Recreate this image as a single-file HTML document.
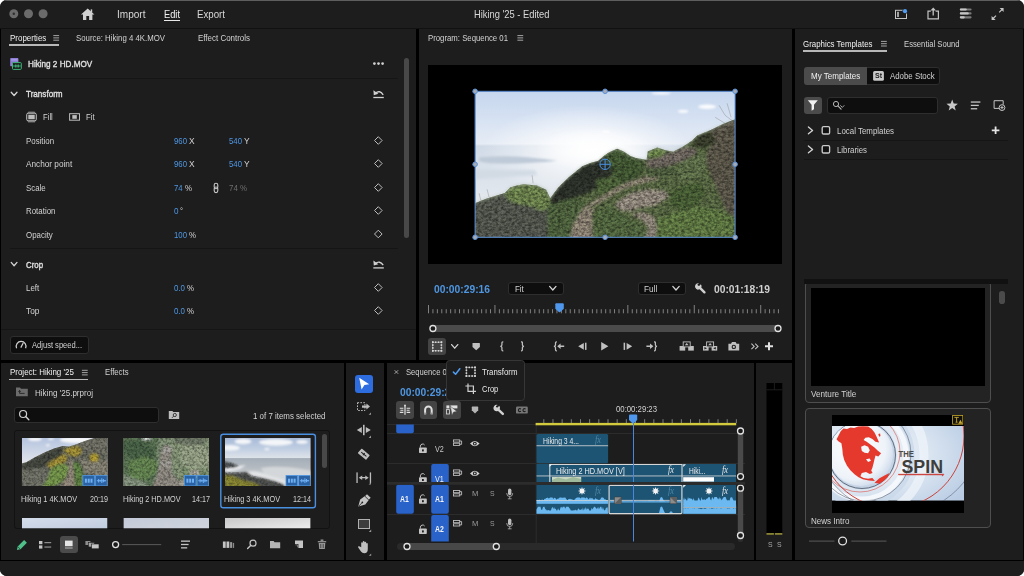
<!DOCTYPE html>
<html lang="en">
<head>
<meta charset="utf-8">
<title>Hiking '25 - Edited</title>
<style>
html,body{margin:0;padding:0;background:#fff;}
body{width:1024px;height:576px;overflow:hidden;position:relative;font-family:"Liberation Sans",sans-serif;}
#win{position:absolute;left:0;top:0;width:1024px;height:576px;background:#000;border-radius:7px;overflow:hidden;}
.b{position:absolute;box-sizing:border-box;}
.t{position:absolute;white-space:nowrap;line-height:1;transform-origin:0 50%;color:#d2d2d2;}
svg.ov{position:absolute;left:0;top:0;width:1024px;height:576px;overflow:hidden;}
</style>
</head>
<body>
<div id="win">
<div class="b titlebar" style="left:0px;top:0px;width:1024px;height:28px;background:#1d1d1d;"></div>
<div class="b" style="left:0px;top:0px;width:1024px;height:1px;background:#5e5e5e;"></div>
<div class="b" style="left:0px;top:28px;width:1024px;height:1px;background:#111;"></div>
<div class="b panel props" style="left:1px;top:29px;width:415px;height:331.3px;background:#1d1d1d;"></div>
<div class="b panel program" style="left:419px;top:29px;width:373px;height:331.3px;background:#1d1d1d;"></div>
<div class="b panel graphics" style="left:794.6px;top:29px;width:228px;height:531px;background:#1d1d1d;"></div>
<div class="b panel project" style="left:1px;top:363px;width:342.5px;height:197px;background:#1d1d1d;"></div>
<div class="b panel tools" style="left:346.4px;top:363px;width:37.8px;height:197px;background:#1d1d1d;"></div>
<div class="b panel timeline" style="left:387px;top:363px;width:366.8px;height:197px;background:#1d1d1d;"></div>
<div class="b panel meters" style="left:756.3px;top:363px;width:35.7px;height:197px;background:#1d1d1d;"></div>
<div class="b statusbar" style="left:0px;top:561.2px;width:1024px;height:15px;background:#1d1d1d;"></div>
<div class="b" style="left:164px;top:19.6px;width:16px;height:1.2px;background:#e8e8e8;"></div>
<div class="b" style="left:9px;top:44px;width:50px;height:1.5px;background:#b8b8b8;"></div>
<div class="b" style="left:10px;top:77.6px;width:388px;height:1px;background:#151515;"></div>
<div class="b" style="left:10px;top:248.2px;width:388px;height:1px;background:#151515;"></div>
<div class="b" style="left:1px;top:329px;width:415px;height:1px;background:#151515;"></div>
<div class="b" style="left:10.4px;top:336.4px;width:78.2px;height:17.2px;background:#0e0e0e;border:1px solid #2e2e2e;border-radius:3px;"></div>
<div class="b" style="left:403.7px;top:57.8px;width:5.3px;height:180.5px;background:#484848;border-radius:2.7px;"></div>
<div class="b" style="left:428px;top:65px;width:354px;height:198.5px;background:#000;"></div>
<div class="b" style="left:508.4px;top:282.3px;width:55.2px;height:12.4px;background:#0e0e0e;border:1px solid #2e2e2e;border-radius:3px;"></div>
<div class="b" style="left:637.7px;top:282.3px;width:48.5px;height:12.4px;background:#0e0e0e;border:1px solid #2e2e2e;border-radius:3px;"></div>
<div class="b" style="left:431px;top:325px;width:349px;height:7px;background:#4b4b4b;border-radius:3.5px;"></div>
<div class="b" style="left:428px;top:337.8px;width:18px;height:17.4px;background:#444;border-radius:3px;"></div>
<div class="b" style="left:9px;top:378.6px;width:78.8px;height:1.5px;background:#b8b8b8;"></div>
<div class="b" style="left:13.5px;top:406.5px;width:145.4px;height:16.8px;background:#0e0e0e;border:1px solid #2e2e2e;border-radius:3px;"></div>
<div class="b" style="left:13.7px;top:430.3px;width:316.6px;height:99.2px;background:#1d1d1d;border:1px solid #121212;border-radius:3px;"></div>
<div class="b" style="left:321.7px;top:433.6px;width:5.5px;height:34.2px;background:#484848;border-radius:2.7px;"></div>
<div class="b" style="left:60px;top:535.8px;width:17.5px;height:17.3px;background:#4b4b4b;border-radius:3px;"></div>
<div class="b" style="left:355.2px;top:375px;width:17.8px;height:17.6px;background:#2d6de0;border-radius:3px;"></div>
<div class="b" style="left:396.2px;top:401.2px;width:17.6px;height:17.5px;background:#444;border-radius:3px;"></div>
<div class="b" style="left:419.7px;top:401.2px;width:17.6px;height:17.5px;background:#444;border-radius:3px;"></div>
<div class="b" style="left:443px;top:401.2px;width:17.6px;height:17.5px;background:#444;border-radius:3px;"></div>
<div class="b" style="left:802.5px;top:50px;width:84.5px;height:1.5px;background:#b8b8b8;"></div>
<div class="b" style="left:804.1px;top:67.3px;width:136px;height:17.4px;background:#0e0e0e;border:1px solid #2e2e2e;border-radius:3px;"></div>
<div class="b" style="left:804.1px;top:67.3px;width:63.2px;height:17.4px;background:#4b4b4b;border-radius:3px 0 0 3px;"></div>
<div class="b" style="left:804.1px;top:96.6px;width:17.5px;height:17.5px;background:#4b4b4b;border-radius:3px;"></div>
<div class="b" style="left:827.4px;top:96.5px;width:110.2px;height:17.2px;background:#0e0e0e;border:1px solid #2e2e2e;border-radius:3px;"></div>
<div class="b" style="left:804px;top:139.6px;width:203.5px;height:1px;background:#151515;"></div>
<div class="b" style="left:804px;top:158.6px;width:203.5px;height:1px;background:#151515;"></div>
<div class="b" style="left:804px;top:279px;width:204px;height:4px;background:#111;"></div>
<div class="b" style="left:805px;top:281px;width:185.5px;height:121.6px;background:#232323;border:1px solid #4e4e4e;border-radius:4px;"></div>
<div class="b" style="left:804px;top:274px;width:204px;height:5px;background:#1d1d1d;"></div>
<div class="b" style="left:804.1px;top:278.9px;width:203.7px;height:5px;background:#111;"></div>
<div class="b" style="left:810.7px;top:287.6px;width:174.5px;height:98.6px;background:#000;"></div>
<div class="b" style="left:805px;top:408.4px;width:185.5px;height:120px;background:#232323;border:1px solid #4e4e4e;border-radius:4px;"></div>
<div class="b" style="left:832px;top:414.6px;width:131.8px;height:98px;background:#000;"></div>
<div class="b" style="left:999px;top:291px;width:5.6px;height:12.6px;background:#4b4b4b;border-radius:2.8px;"></div>
<svg class="ov" viewBox="0 0 1024 576">
<circle cx="13.8" cy="13.8" r="4.5" fill="#6b6b6b"/>
<circle cx="28.5" cy="13.8" r="4.5" fill="#6b6b6b"/>
<circle cx="43.1" cy="13.8" r="4.5" fill="#6b6b6b"/>
<circle cx="13.8" cy="13.8" r="1.2" fill="#2e2e2e"/>
<g transform="translate(81 8.5)" ><path d="M6.7 0L13.4 6.1H11.4V11.5H8.1V7.6H5.3V11.5H2V6.1H0Z" fill="#d0d0d0"/><rect x="9.7" y="0.9" width="1.5" height="3" fill="#d0d0d0"/></g>
<g transform="translate(895 9.8)" ><rect x="0.5" y="0.5" width="11" height="8.2" fill="none" stroke="#c4c4c4" stroke-width="1"/><rect x="2.2" y="2" width="1.6" height="5.2" fill="#c4c4c4"/><circle cx="10" cy="1.4" r="2.6" fill="#1d1d1d"/><circle cx="10" cy="1.4" r="2.1" fill="#4f9cf0"/></g>
<g transform="translate(927.4 7.6)" ><path d="M3.4 3.6H0.6V11.2H11V3.6H8.2" fill="none" stroke="#c4c4c4" stroke-width="1.2"/><path d="M5.8 8V1.6" stroke="#c4c4c4" stroke-width="1.3"/><path d="M3 3L5.8 0L8.6 3Z" fill="#c4c4c4"/></g>
<g transform="translate(959.8 8.4)" ><rect x="0" y="0.0" width="11.8" height="2.2" rx="1.1" fill="#7a7a7a"/><rect x="0" y="0.0" width="7" height="2.2" rx="1.1" fill="#c4c4c4"/><rect x="0" y="3.9" width="11.8" height="2.2" rx="1.1" fill="#7a7a7a"/><rect x="0" y="3.9" width="9" height="2.2" rx="1.1" fill="#c4c4c4"/><rect x="0" y="7.8" width="11.8" height="2.2" rx="1.1" fill="#7a7a7a"/><rect x="0" y="7.8" width="5" height="2.2" rx="1.1" fill="#c4c4c4"/></g>
<g transform="translate(991.6 8)" ><path d="M7.6 4.4L11 1M1 11L4.4 7.6" stroke="#c4c4c4" stroke-width="1.2"/><path d="M8 0H12V4Z M0 8V12H4Z" fill="#c4c4c4"/></g>
<g transform="translate(53.3 35.2)" ><path d="M0 0.4H5.8M0 2.7H5.8M0 5H5.8" stroke="#b4b4b4" stroke-width="0.9" fill="none"/></g>
<g transform="translate(10.2 58.1)" ><rect x="0" y="0" width="8.2" height="8.2" rx="0.8" fill="#8e7fd6"/><rect x="0.9" y="0.9" width="6.4" height="1.6" fill="#a597e6"/><rect x="2.3" y="4.5" width="8.8" height="6.8" rx="0.8" fill="#1d1d1d" stroke="#3fb57a" stroke-width="1"/><path d="M2.8 7.9H10.6M5.2 6.4V9.4M6.8 6.4V9.4M8.4 6.4V9.4" stroke="#3fb57a" stroke-width="0.9"/></g>
<circle cx="374.4" cy="63.6" r="1.35" fill="#d0d0d0"/><circle cx="378.5" cy="63.6" r="1.35" fill="#d0d0d0"/><circle cx="382.59999999999997" cy="63.6" r="1.35" fill="#d0d0d0"/>
<g transform="translate(11.2 92.2)" ><path d="M0 0L2.9 3.3L5.8 0" stroke="#d4d4d4" stroke-width="1.3" fill="none" stroke-linejoin="round" stroke-linecap="round"/></g>
<g transform="translate(373 90)" ><path d="M0.3 7.5H10.8" stroke="#d0d0d0" stroke-width="1.3" fill="none"/><path d="M2.4 3.2Q6.6 -0.4 10.2 4.8" stroke="#d0d0d0" stroke-width="1.4" fill="none"/><path d="M0.4 0.2L0.8 5.2L5.4 3.8Z" fill="#d0d0d0"/></g>
<g transform="translate(26.2 111.4)" ><rect x="1.6" y="0" width="7.4" height="11.2" rx="1.2" fill="#6f6f6f"/><rect x="0.5" y="1.8" width="9.6" height="7.6" rx="1.4" fill="#2a2a2a" stroke="#bdbdbd" stroke-width="1"/><rect x="2.1" y="3.4" width="6.4" height="4.4" fill="#bdbdbd"/></g>
<g transform="translate(69.1 113.2)" ><rect x="0.5" y="0.5" width="9.9" height="6.5" fill="none" stroke="#bdbdbd" stroke-width="1"/><rect x="3.2" y="1.9" width="4.5" height="3.7" fill="#bdbdbd"/></g>
<path d="M378.3 136.7L382.1 140.5L378.3 144.3L374.5 140.5Z" fill="none" stroke="#bdbdbd" stroke-width="1"/>
<path d="M378.3 159.7L382.1 163.5L378.3 167.3L374.5 163.5Z" fill="none" stroke="#bdbdbd" stroke-width="1"/>
<path d="M378.3 183.7L382.1 187.5L378.3 191.3L374.5 187.5Z" fill="none" stroke="#bdbdbd" stroke-width="1"/>
<path d="M378.3 206.7L382.1 210.5L378.3 214.3L374.5 210.5Z" fill="none" stroke="#bdbdbd" stroke-width="1"/>
<path d="M378.3 230.2L382.1 234.0L378.3 237.8L374.5 234.0Z" fill="none" stroke="#bdbdbd" stroke-width="1"/>
<g transform="translate(213.6 182.6)" ><rect x="0.6" y="0.6" width="3.6" height="5.6" rx="1.8" fill="none" stroke="#c8c8c8" stroke-width="1.1"/><rect x="0.6" y="4.4" width="3.6" height="5.6" rx="1.8" fill="none" stroke="#c8c8c8" stroke-width="1.1"/></g>
<g transform="translate(11.2 262.4)" ><path d="M0 0L2.9 3.3L5.8 0" stroke="#d4d4d4" stroke-width="1.3" fill="none" stroke-linejoin="round" stroke-linecap="round"/></g>
<g transform="translate(373 260.4)" ><path d="M0.3 7.5H10.8" stroke="#d0d0d0" stroke-width="1.3" fill="none"/><path d="M2.4 3.2Q6.6 -0.4 10.2 4.8" stroke="#d0d0d0" stroke-width="1.4" fill="none"/><path d="M0.4 0.2L0.8 5.2L5.4 3.8Z" fill="#d0d0d0"/></g>
<path d="M378.3 283.7L382.1 287.5L378.3 291.3L374.5 287.5Z" fill="none" stroke="#bdbdbd" stroke-width="1"/>
<path d="M378.3 306.7L382.1 310.5L378.3 314.3L374.5 310.5Z" fill="none" stroke="#bdbdbd" stroke-width="1"/>
<g transform="translate(15.6 340)" ><path d="M1 8.2A4.9 4.9 0 1 1 10 8.2" fill="none" stroke="#d0d0d0" stroke-width="1.2"/><path d="M5.2 7.6L7.6 3" stroke="#d0d0d0" stroke-width="1.2"/></g>
<g transform="translate(517.4 35.2)" ><path d="M0 0.4H5.8M0 2.7H5.8M0 5H5.8" stroke="#b4b4b4" stroke-width="0.9" fill="none"/></g>
<svg x="475.1" y="91.3" width="260" height="146" viewBox="0 0 260 146" preserveAspectRatio="none" overflow="hidden">
<defs>
<linearGradient id="mpsky" x1="0" y1="0" x2="0" y2="1">
<stop offset="0" stop-color="#c6d6ee"/><stop offset="0.18" stop-color="#d5e1f2"/><stop offset="0.36" stop-color="#e6ecf5"/><stop offset="0.375" stop-color="#d0dae7"/><stop offset="0.5" stop-color="#d8e0ea"/><stop offset="0.75" stop-color="#e3e8ee"/><stop offset="1" stop-color="#e8ecf0"/>
</linearGradient>
<radialGradient id="mpsun" cx="0.5" cy="0.5" r="0.5">
<stop offset="0" stop-color="#ffffff" stop-opacity="0.95"/><stop offset="0.45" stop-color="#ffffff" stop-opacity="0.6"/><stop offset="1" stop-color="#ffffff" stop-opacity="0"/>
</radialGradient>
<filter id="mpb1" x="-20%" y="-20%" width="140%" height="140%"><feGaussianBlur stdDeviation="1"/></filter>
<filter id="mpb2" x="-20%" y="-20%" width="140%" height="140%"><feGaussianBlur stdDeviation="1.8"/></filter>
<filter id="mpn" x="0" y="0" width="100%" height="100%">
<feTurbulence type="fractalNoise" baseFrequency="0.3 0.4" numOctaves="4" seed="4" result="t"/>
<feColorMatrix in="t" type="matrix" values="0 0 0 0 0  0 0 0 0 0  0 0 0 0 0  1.9 0 0 0 -0.7"/>
<feComposite in2="SourceGraphic" operator="in"/>
</filter>
<filter id="mpn2" x="0" y="0" width="100%" height="100%">
<feTurbulence type="fractalNoise" baseFrequency="0.35 0.45" numOctaves="4" seed="11" result="t"/>
<feColorMatrix in="t" type="matrix" values="0 0 0 0 0  0 0 0 0 0  0 0 0 0 0  0 2.0 0 0 -0.8"/>
<feComposite in2="SourceGraphic" operator="in"/>
</filter>
<clipPath id="mpland"><path d="M-2.4 112.8 L11.0 107.5 L21.7 104.3 L29.7 101.6 L35.0 96.3 L41.7 94.1 L48.4 93.0 L61.8 94.1 L71.1 98.4 L75.1 107.0 L83.2 96.3 L93.9 85.6 L107.2 74.9 L115.2 71.7 L123.3 69.5 L128.6 64.7 L134.0 61.0 L142.0 57.5 L148.7 60.2 L155.3 64.7 L160.7 66.8 L171.4 68.4 L172.7 60.2 L182.1 56.1 L189.6 58.8 L198.1 60.4 L208.8 54.8 L216.8 49.5 L222.2 44.1 L235.6 38.8 L248.9 32.1 L262.3 27.3 L262.3 149.7 L-2.4 149.7 Z"/></clipPath>
</defs>
<rect width="260" height="146" fill="url(#mpsky)"/>
<ellipse cx="112" cy="60" rx="105" ry="46" fill="url(#mpsun)"/><ellipse cx="120" cy="58" rx="60" ry="22" fill="url(#mpsun)"/>
<path d="M4 66 Q40 62.5 82 69.5 Q60 72 30 72.5 Q12 72.5 4 70 Z" fill="#bfcad8" filter="url(#mpb1)"/>
<path d="M0 78 L60 79 L62 84 L0 88 Z" fill="#d2dae4" filter="url(#mpb2)"/>
<g fill="#fff" filter="url(#mpb1)" opacity="0.9"><ellipse cx="232" cy="15.5" rx="9" ry="2.2"/><ellipse cx="208" cy="20" rx="5" ry="1.5"/><ellipse cx="131" cy="40.5" rx="4" ry="1"/><ellipse cx="186" cy="2" rx="10" ry="1.2"/></g>
<g clip-path="url(#mpland)">
<rect width="260" height="146" fill="#67794f"/>
<g filter="url(#mpb2)">
<path d="M75.1 107.0 L83.2 96.3 L93.9 85.6 L107.2 74.9 L123.3 69.5 L134.0 61.5 L142.0 58.8 L144.7 69.5 L139.3 80.2 L134.0 86.9 L123.3 96.3 L109.9 102.9 L96.5 107.0 L83.2 112.3 L75.1 113.6 Z" fill="#353b30"/>
<path d="M128.6 64.7 L142.0 57.5 L155.3 64.7 L166.0 68.2 L168.7 77.5 L160.7 88.2 L150.0 93.6 L139.3 88.2 L136.6 77.5 Z" fill="#50683d"/>
<path d="M120.6 88.2 L139.3 85.6 L147.3 93.6 L139.3 101.6 L123.3 104.3 Z" fill="#5b7445"/>
<path d="M-2.4 112.8 L11.0 107.5 L29.7 101.6 L35.0 109.6 L61.8 112.3 L72.5 117.6 L75.1 149.7 L-2.4 149.7 Z" fill="#62665b"/>
<path d="M29.7 101.6 L35.0 96.3 L48.4 93.0 L61.8 94.1 L71.1 98.4 L75.1 107.0 L74.1 115.0 L67.1 120.3 L56.4 115.0 L40.4 112.3 L32.4 108.3 Z" fill="#809a5b"/>
<path d="M72.5 115.0 L85.8 109.6 L101.9 107.0 L112.6 112.3 L107.2 123.0 L96.5 133.7 L93.9 149.7 L72.5 149.7 Z" fill="#5b7348"/>
<path d="M94.4 149.7 L97.9 133.7 L104.5 123.0 L113.9 116.3 L123.3 112.3 L136.6 104.3 L148.7 97.6 L158.0 94.1 L168.7 91.4 L182.1 88.8 L186.4 82.9 L179.4 81.8 L166.0 87.2 L152.7 90.9 L139.3 97.6 L128.6 104.3 L117.9 110.2 L109.9 115.5 L103.2 122.5 L99.2 133.7 L96.5 149.7 Z" fill="#a79b8a"/>
<path d="M94.4 149.7 L98.1 133.7 L105.1 123.0 L114.7 116.6 L120.6 118.2 L118.4 128.3 L117.4 139.0 L117.9 149.7 Z" fill="#a69a89"/>
<path d="M139.3 112.3 L155.3 101.6 L171.4 97.6 L187.4 98.9 L195.5 104.3 L187.4 109.6 L179.4 115.0 L166.0 116.3 L155.3 120.3 L144.7 119.0 Z" fill="#aaa093"/>
<path d="M155.3 123.0 L168.7 120.3 L179.4 125.7 L182.1 136.4 L179.4 149.7 L168.7 149.7 L173.5 136.4 L166.0 128.3 Z" fill="#a69c8e"/>
<path d="M116.6 120.3 L134.0 113.6 L144.7 120.3 L155.3 128.3 L166.0 133.7 L168.7 149.7 L117.9 149.7 Z" fill="#60784b"/>
<path d="M171.4 68.4 L182.1 64.7 L198.1 60.4 L208.8 55.6 L219.5 56.7 L222.2 62.0 L208.8 69.5 L192.8 74.9 L179.4 77.5 L171.4 74.9 Z" fill="#81786f"/>
<path d="M168.7 77.5 L182.1 76.2 L198.1 74.9 L200.8 81.6 L187.4 85.6 L174.1 86.9 Z" fill="#5b6e48"/>
<path d="M172.7 60.2 L182.1 56.1 L189.6 58.8 L187.4 64.7 L179.4 66.8 L173.5 66.8 Z" fill="#7d9a57"/>
<path d="M216.8 49.5 L222.2 44.1 L235.6 38.8 L243.6 41.4 L240.9 50.8 L230.2 56.7 L219.5 56.7 Z" fill="#454c35"/>
<path d="M235.6 38.8 L248.9 32.1 L262.3 27.3 L262.3 128.3 L251.6 120.3 L243.6 101.6 L235.6 82.9 L230.2 69.5 L232.9 57.5 L240.9 50.8 Z" fill="#6a6557"/>
<path d="M192.8 101.6 L208.8 93.6 L224.9 90.9 L230.2 101.6 L222.2 115.0 L206.1 119.0 L195.5 115.0 Z" fill="#577040"/>
<path d="M182.1 128.3 L203.5 120.3 L224.9 115.0 L246.3 120.3 L262.3 128.3 L262.3 149.7 L182.1 149.7 Z" fill="#6f8d50"/>
<path d="M208.8 69.5 L222.2 62.8 L231.6 64.2 L230.2 74.9 L222.2 85.6 L208.8 88.2 L200.8 82.9 Z" fill="#6f8458"/>
</g>
<rect width="260" height="146" fill="#12180c" filter="url(#mpn)" opacity="0.5"/>
<rect width="260" height="146" fill="#e4e8d2" filter="url(#mpn2)" opacity="0.4"/>
</g>
<path d="M-2.4 112.8 L11.0 107.5 L21.7 104.3 L29.7 101.6 L35.0 96.3 L41.7 94.1 L48.4 93.0 L61.8 94.1 L71.1 98.4 L75.1 107.0 L83.2 96.3 L93.9 85.6 L107.2 74.9 L115.2 71.7 L123.3 69.5 L128.6 64.7 L134.0 61.0 L142.0 57.5 L148.7 60.2 L155.3 64.7 L160.7 66.8 L171.4 68.4 L172.7 60.2 L182.1 56.1 L189.6 58.8 L198.1 60.4 L208.8 54.8 L216.8 49.5 L222.2 44.1 L235.6 38.8 L248.9 32.1 L262.3 27.3 L262.3 149.7 L-2.4 149.7 Z" fill="none" stroke="#b9c2b8" stroke-width="1.6" opacity="0.55" filter="url(#mpb1)"/>
<g stroke="#77766c" stroke-width="0.5" fill="none" opacity="0.7"><path d="M244 14 L250 24 L258 30 M252 12 L256 26 M240 26 L250 32 M58 92 L57 84 M14 106 L12 98 M6 110 L4 102"/></g>
</svg>
<rect x="475.1" y="91.3" width="260" height="146" fill="none" stroke="#5b8fd6" stroke-width="1"/>
<circle cx="475.1" cy="91.3" r="2.3" fill="#a4abb6" stroke="#5b8fd6" stroke-width="1"/>
<circle cx="475.1" cy="164.3" r="2.3" fill="#a4abb6" stroke="#5b8fd6" stroke-width="1"/>
<circle cx="475.1" cy="237.3" r="2.3" fill="#a4abb6" stroke="#5b8fd6" stroke-width="1"/>
<circle cx="605.1" cy="91.3" r="2.3" fill="#a4abb6" stroke="#5b8fd6" stroke-width="1"/>
<circle cx="605.1" cy="237.3" r="2.3" fill="#a4abb6" stroke="#5b8fd6" stroke-width="1"/>
<circle cx="735.1" cy="91.3" r="2.3" fill="#a4abb6" stroke="#5b8fd6" stroke-width="1"/>
<circle cx="735.1" cy="164.3" r="2.3" fill="#a4abb6" stroke="#5b8fd6" stroke-width="1"/>
<circle cx="735.1" cy="237.3" r="2.3" fill="#a4abb6" stroke="#5b8fd6" stroke-width="1"/>
<g stroke="#4a90e2" stroke-width="1" fill="none"><circle cx="605.1" cy="164.3" r="5.2"/><path d="M599.9 164.3H610.3M605.1 159.1V169.5"/></g>
<g transform="translate(549.6 286.4)" ><path d="M0 0L3.2 3.6L6.4 0" stroke="#d4d4d4" stroke-width="1.3" fill="none" stroke-linejoin="round" stroke-linecap="round"/></g>
<g transform="translate(672.8 286.4)" ><path d="M0 0L3.2 3.6L6.4 0" stroke="#d4d4d4" stroke-width="1.3" fill="none" stroke-linejoin="round" stroke-linecap="round"/></g>
<g transform="translate(695 283)" ><g transform="scale(1.0)"><path d="M3.4 0.2A3.3 3.3 0 0 0 0.2 4.6A3.3 3.3 0 0 0 4.6 6.3L8.6 10.2A1.2 1.2 0 0 0 10.3 8.5L6.3 4.6A3.3 3.3 0 0 0 5.9 1.2L4.1 3L2.8 2.6L2.5 1.3L4.2 0.3Z" fill="#d0d0d0"/></g></g>
<path d="M428.50 305V313.3M432.93 309.2V313.3M437.36 309.2V313.3M441.79 309.2V313.3M446.22 309.2V313.3M450.65 309.2V313.3M455.08 309.2V313.3M459.51 309.2V313.3M463.94 309.2V313.3M468.37 309.2V313.3M472.80 309.2V313.3M477.22 309.2V313.3M481.65 309.2V313.3M486.08 309.2V313.3M490.51 309.2V313.3M494.94 305V313.3M499.37 309.2V313.3M503.80 309.2V313.3M508.23 309.2V313.3M512.66 309.2V313.3M517.09 309.2V313.3M521.52 309.2V313.3M525.95 309.2V313.3M530.38 309.2V313.3M534.81 309.2V313.3M539.24 309.2V313.3M543.67 309.2V313.3M548.10 309.2V313.3M552.53 309.2V313.3M556.96 309.2V313.3M561.38 305V313.3M565.81 309.2V313.3M570.24 309.2V313.3M574.67 309.2V313.3M579.10 309.2V313.3M583.53 309.2V313.3M587.96 309.2V313.3M592.39 309.2V313.3M596.82 309.2V313.3M601.25 309.2V313.3M605.68 309.2V313.3M610.11 309.2V313.3M614.54 309.2V313.3M618.97 309.2V313.3M623.40 309.2V313.3M627.83 305V313.3M632.26 309.2V313.3M636.69 309.2V313.3M641.12 309.2V313.3M645.55 309.2V313.3M649.98 309.2V313.3M654.40 309.2V313.3M658.83 309.2V313.3M663.26 309.2V313.3M667.69 309.2V313.3M672.12 309.2V313.3M676.55 309.2V313.3M680.98 309.2V313.3M685.41 309.2V313.3M689.84 309.2V313.3M694.27 305V313.3M698.70 309.2V313.3M703.13 309.2V313.3M707.56 309.2V313.3M711.99 309.2V313.3M716.42 309.2V313.3M720.85 309.2V313.3M725.28 309.2V313.3M729.71 309.2V313.3M734.14 309.2V313.3M738.57 309.2V313.3M742.99 309.2V313.3M747.42 309.2V313.3M751.85 309.2V313.3M756.28 309.2V313.3M760.71 305V313.3M765.14 309.2V313.3M769.57 309.2V313.3M774.00 309.2V313.3M778.43 309.2V313.3" stroke="#9c9c9c" stroke-width="0.8"/>
<path d="M555.3 304.2Q555.3 303.2 556.3 303.2H562.8Q563.8 303.2 563.8 304.2V308.8L560 312.2H559.1L555.3 308.8Z" fill="#4f97ec"/>
<circle cx="432.9" cy="328.5" r="3" fill="#1b1b1b" stroke="#e2e2e2" stroke-width="1.3"/>
<circle cx="778" cy="328.5" r="3" fill="#1b1b1b" stroke="#e2e2e2" stroke-width="1.3"/>
<g transform="translate(432 341.4)" ><rect x="0.00" y="0.00" width="1.6" height="1.6" fill="#d8d8d8"/><rect x="0.00" y="8.60" width="1.6" height="1.6" fill="#d8d8d8"/><rect x="0.00" y="0.00" width="1.6" height="1.6" fill="#d8d8d8"/><rect x="8.60" y="0.00" width="1.6" height="1.6" fill="#d8d8d8"/><rect x="2.87" y="0.00" width="1.6" height="1.6" fill="#d8d8d8"/><rect x="2.87" y="8.60" width="1.6" height="1.6" fill="#d8d8d8"/><rect x="0.00" y="2.87" width="1.6" height="1.6" fill="#d8d8d8"/><rect x="8.60" y="2.87" width="1.6" height="1.6" fill="#d8d8d8"/><rect x="5.73" y="0.00" width="1.6" height="1.6" fill="#d8d8d8"/><rect x="5.73" y="8.60" width="1.6" height="1.6" fill="#d8d8d8"/><rect x="0.00" y="5.73" width="1.6" height="1.6" fill="#d8d8d8"/><rect x="8.60" y="5.73" width="1.6" height="1.6" fill="#d8d8d8"/><rect x="8.60" y="0.00" width="1.6" height="1.6" fill="#d8d8d8"/><rect x="8.60" y="8.60" width="1.6" height="1.6" fill="#d8d8d8"/><rect x="0.00" y="8.60" width="1.6" height="1.6" fill="#d8d8d8"/><rect x="8.60" y="8.60" width="1.6" height="1.6" fill="#d8d8d8"/><rect x="0.8" y="0.8" width="8.6" height="8.6" fill="none" stroke="#d8d8d8" stroke-width="0.5" opacity="0.6"/></g>
<g transform="translate(451.6 344.6)" ><path d="M0 0L3.1 3.6L6.2 0" stroke="#d4d4d4" stroke-width="1.3" fill="none" stroke-linejoin="round" stroke-linecap="round"/></g>
<g transform="translate(472.5 343)" ><path d="M0 0.6Q0 0 0.6 0H6.800000000000001Q7.4 0 7.4 0.6V3.9600000000000004L3.7 7.2L0 3.9600000000000004Z" fill="#c0c0c0"/></g>
<g transform="translate(500 341.6)" ><path d="M3.3 0.2H2.9Q1.9 0.2 1.9 1.2V3.5Q1.9 4.6 0.3 4.7Q1.9 4.8 1.9 5.9V8.2Q1.9 9.2 2.9 9.2H3.3" fill="none" stroke="#c0c0c0" stroke-width="1.25"/></g>
<g transform="translate(521 341.6)" ><path d="M0 0.2H0.4Q1.4 0.2 1.4 1.2V3.5Q1.4 4.6 3 4.7Q1.4 4.8 1.4 5.9V8.2Q1.4 9.2 0.4 9.2H0" fill="none" stroke="#c0c0c0" stroke-width="1.25"/></g>
<g transform="translate(553.6 341.6)" ><path d="M3.3 0.2H2.9Q1.9 0.2 1.9 1.2V3.5Q1.9 4.6 0.3 4.7Q1.9 4.8 1.9 5.9V8.2Q1.9 9.2 2.9 9.2H3.3" fill="none" stroke="#c0c0c0" stroke-width="1.25"/></g><g transform="translate(557.2 341.6)" ><path d="M0 4.7L3.4 2V3.9H7V5.5H3.4V7.4Z" fill="#c0c0c0"/></g>
<g transform="translate(578.2 342.3)" ><path d="M0 4L5.6 0.6V7.4Z" fill="#c0c0c0"/><rect x="6.8" y="0.4" width="1.5" height="7.2" fill="#c0c0c0"/></g>
<g transform="translate(601.2 342)" ><path d="M0 0L7.2 4.2L0 8.4Z" fill="#c0c0c0"/></g>
<g transform="translate(623.6 342.3)" ><rect x="0" y="0.4" width="1.5" height="7.2" fill="#c0c0c0"/><path d="M8.6 4L3 0.6V7.4Z" fill="#c0c0c0"/></g>
<g transform="translate(646.4 341.6)" ><path d="M7 4.7L3.6 2V3.9H0V5.5H3.6V7.4Z" fill="#c0c0c0"/></g><g transform="translate(654.0 341.6)" ><path d="M0 0.2H0.4Q1.4 0.2 1.4 1.2V3.5Q1.4 4.6 3 4.7Q1.4 4.8 1.4 5.9V8.2Q1.4 9.2 0.4 9.2H0" fill="none" stroke="#c0c0c0" stroke-width="1.25"/></g>
<g transform="translate(679.6 341.4)" ><rect x="0" y="4.6" width="5.6" height="4.6" fill="#c0c0c0"/><rect x="8.6" y="4.6" width="5.6" height="4.6" fill="#c0c0c0"/><rect x="3.6" y="0.5" width="7" height="5" fill="#1d1d1d" stroke="#c0c0c0" stroke-width="0.9"/><path d="M7.1 1.6L9 3.8H5.2Z" fill="#c0c0c0"/></g>
<g transform="translate(703 341.4)" ><rect x="0" y="4.6" width="5.6" height="4.6" fill="#c0c0c0"/><rect x="8.6" y="4.6" width="5.6" height="4.6" fill="#c0c0c0"/><rect x="3.6" y="0.5" width="7" height="5" fill="#1d1d1d" stroke="#c0c0c0" stroke-width="0.9"/><path d="M7.1 1.6L9 3.8H5.2Z" fill="#c0c0c0"/><path d="M1.4 5.6L4 6.9L1.4 8.2Z M12.8 5.6L10.2 6.9L12.8 8.2Z" fill="#1d1d1d"/></g>
<g transform="translate(728.4 342)" ><path d="M0 1.8H2.6L3.6 0H7.2L8.2 1.8H10.8V8.4H0Z" fill="#c0c0c0"/><circle cx="5.4" cy="4.9" r="2.2" fill="#1d1d1d"/><circle cx="5.4" cy="4.9" r="1.1" fill="#c0c0c0"/></g>
<g transform="translate(751.4 343.6)" ><path d="M0 0L2.8 2.8L0 5.6M3.8 0L6.6 2.8L3.8 5.6" fill="none" stroke="#c0c0c0" stroke-width="1.1"/></g>
<path d="M765 346.3H773M769 342.3V350.3" stroke="#e0e0e0" stroke-width="2" fill="none"/>
<g transform="translate(81.9 369.9)" ><path d="M0 0.4H5.8M0 2.7H5.8M0 5H5.8" stroke="#b4b4b4" stroke-width="0.9" fill="none"/></g>
<g transform="translate(16 387.2)" ><path d="M0 0.4H4L5 1.5H11.8V9H0Z" fill="#6c6c6c"/><path d="M3.6 3.4V6.2H8.6M3.6 3.2L2.4 4.6M3.6 3.2L4.8 4.6" stroke="#1d1d1d" stroke-width="0.8" fill="none"/></g>
<circle cx="23.1" cy="414" r="3.5" fill="none" stroke="#d0d0d0" stroke-width="1.2"/><path d="M25.62 416.52L28.82 419.71999999999997" stroke="#d0d0d0" stroke-width="1.4" stroke-linecap="round"/>
<g transform="translate(168.8 410.4)" ><path d="M0 0.5H3.6L4.4 1.6H10.4V8.7H0Z" fill="#bdbdbd"/><circle cx="6" cy="4.6" r="1.6" fill="none" stroke="#1d1d1d" stroke-width="0.8"/><path d="M4.8 5.8L3.2 7.4" stroke="#1d1d1d" stroke-width="0.9"/></g>
<svg x="21.9" y="437.9" width="85.6" height="48.1" viewBox="0 0 85.6 48" preserveAspectRatio="none" overflow="hidden">
<defs><filter id="t1b" x="-20%" y="-20%" width="140%" height="140%"><feGaussianBlur stdDeviation="0.9"/></filter>
<filter id="t1n" x="0" y="0" width="100%" height="100%">
<feTurbulence type="fractalNoise" baseFrequency="0.42" numOctaves="4" seed="7" result="t"/>
<feColorMatrix in="t" type="matrix" values="0 0 0 0 0  0 0 0 0 0  0 0 0 0 0  1.9 0 0 0 -0.7"/>
<feComposite in2="SourceGraphic" operator="in"/>
</filter><linearGradient id="t1s" x1="0" y1="0" x2="0" y2="1"><stop offset="0" stop-color="#b4c3de"/><stop offset="0.35" stop-color="#d3dbe8"/><stop offset="0.55" stop-color="#e3e6ea"/><stop offset="1" stop-color="#c9ced3"/></linearGradient>
<clipPath id="t1c"><path d="M-1 25.6 L4.4 24.4 L13 19.4 L23 14.4 L32 10.6 L40.6 8.1 L47 8.7 L53 6.9 L63 3.1 L75.6 -1 L87 -1 L87 49 L-1 49 Z"/></clipPath></defs>
<rect width="86" height="48" fill="url(#t1s)"/>
<g fill="#f6f7f9" filter="url(#t1b)"><ellipse cx="13" cy="1.2" rx="7" ry="1.8"/><ellipse cx="56" cy="2.2" rx="18" ry="3.2"/><ellipse cx="26" cy="7.4" rx="2" ry="1"/><ellipse cx="29" cy="1" rx="3" ry="1"/></g>
<g clip-path="url(#t1c)">
<rect width="86" height="48" fill="#6b6d62"/>
<g filter="url(#t1b)">
<path d="M0 27 L8 23 L16 19 L26 14 L36 10 L42 10 L40 17 L33 22 L24 28 L12 32 L0 34 Z" fill="#474c42"/>
<path d="M25 26 L33 21 L42 16 L46 19 L44 24 L34 28 L27 30 Z" fill="#a8953a"/>
<path d="M41 12 L48 9 L56 8 L60 11 L59 16 L54 19 L47 17 Z" fill="#ab983a"/>
<path d="M68 17 L73 15 L77 18 L76 24 L71 26 L68 22 Z" fill="#b8a236"/>
<path d="M-1 32 L12 30 L26 32 L32 38 L26 49 L-1 49 Z" fill="#75776c"/>
<path d="M29 30 L36 26 L44 26 L47 30 L46 37 L40 44 L30 49 L20 49 L26 40 Z" fill="#7a9c50"/>
<path d="M39 49 L44 40 L47 30 L47 22 L49 20 L51 24 L52 34 L53 49 Z" fill="#978c7f"/>
<path d="M51 24 L56 24 L60 30 L62 40 L62 49 L53 49 L52 34 Z" fill="#668a49"/>
<path d="M58 20 L70 24 L87 22 L87 40 L74 38 L62 34 Z" fill="#8c897a"/>
<path d="M62 38 L74 40 L87 40 L87 49 L62 49 Z" fill="#83846f"/>
<path d="M56 6 L66 2 L87 -1 L87 18 L76 14 L64 12 Z" fill="#77776c"/>
</g>
<rect width="86" height="48" fill="#10150c" filter="url(#t1n)" opacity="0.5" clip-path="url(#t1c)"/>
</g>
<rect x="61" y="37.5" width="11.6" height="10.4" fill="#2a62a4" stroke="#4f97e3" stroke-width="0.8"/><rect x="73.7" y="37.5" width="11.6" height="10.4" fill="#2a62a4" stroke="#4f97e3" stroke-width="0.8"/><g fill="#6fb0f2"><rect x="63" y="40.7" width="2" height="4"/><rect x="65.8" y="40.7" width="2" height="4"/><rect x="68.6" y="40.7" width="2" height="4"/></g><path d="M74.9 42.7H84.10000000000001M76.7 40.9V44.5M78.3 41.7V43.7M79.9 40.3V45.1M81.5 41.1V44.3M82.9 41.9V43.5" stroke="#6fb0f2" stroke-width="1" fill="none"/>
</svg>
<svg x="123.4" y="437.9" width="85.6" height="48.1" viewBox="0 0 85.6 48" preserveAspectRatio="none" overflow="hidden">
<defs><filter id="t2b" x="-20%" y="-20%" width="140%" height="140%"><feGaussianBlur stdDeviation="0.9"/></filter>
<filter id="t2n" x="0" y="0" width="100%" height="100%">
<feTurbulence type="fractalNoise" baseFrequency="0.42" numOctaves="4" seed="7" result="t"/>
<feColorMatrix in="t" type="matrix" values="0 0 0 0 0  0 0 0 0 0  0 0 0 0 0  1.9 0 0 0 -0.7"/>
<feComposite in2="SourceGraphic" operator="in"/>
</filter><clipPath id="t2c"><rect width="86" height="48"/></clipPath></defs>
<rect width="86" height="48" fill="#84957a"/>
<g filter="url(#t2b)">
<path d="M-2 -2 L36 -2 L34 8 L33 20 L35 30 L30 44 L27 50 L-2 50 Z" fill="#5e7858"/>
<path d="M0 4 L16 2 L28 8 L32 18 L22 22 L8 20 L0 14 Z" fill="#4d674b"/>
<path d="M4 24 L22 18 L34 24 L33 34 L22 42 L8 42 Z" fill="#6b8c56"/>
<path d="M-2 36 L10 40 L22 44 L26 50 L-2 50 Z" fill="#8b9a84"/>
<path d="M28 50 L33 38 L36 26 L37 16 L40 8 L44 6 L48 12 L47 24 L49 36 L56 44 L58 50 Z" fill="#969188"/>
<path d="M38 10 L48 8 L50 14 L40 16 Z M36 24 L48 22 L49 28 L37 30 Z" fill="#a6a39c"/>
<path d="M48 -2 L87 -2 L87 50 L60 50 L54 40 L49 26 L49 12 Z" fill="#8b9b7b"/>
<path d="M56 8 L74 4 L87 12 L87 28 L70 32 L58 26 Z" fill="#9ca88c"/>
<path d="M48 -2 L70 -2 L84 2 L80 7 L62 7 L52 5 Z" fill="#737d6c"/>
<path d="M58 30 L72 34 L87 32 L87 50 L62 50 Z" fill="#7f9470"/>
<ellipse cx="23" cy="0.6" rx="5" ry="1.4" fill="#eef2f0"/>
<ellipse cx="71" cy="35" rx="5" ry="2.6" fill="#b9b5aa"/>
<ellipse cx="60" cy="45" rx="5" ry="3.4" fill="#a9a69c"/>
</g>
<rect width="86" height="48" fill="#10150c" filter="url(#t2n)" opacity="0.5" clip-path="url(#t2c)"/>
<rect x="61" y="37.5" width="11.6" height="10.4" fill="#2a62a4" stroke="#4f97e3" stroke-width="0.8"/><rect x="73.7" y="37.5" width="11.6" height="10.4" fill="#2a62a4" stroke="#4f97e3" stroke-width="0.8"/><g fill="#6fb0f2"><rect x="63" y="40.7" width="2" height="4"/><rect x="65.8" y="40.7" width="2" height="4"/><rect x="68.6" y="40.7" width="2" height="4"/></g><path d="M74.9 42.7H84.10000000000001M76.7 40.9V44.5M78.3 41.7V43.7M79.9 40.3V45.1M81.5 41.1V44.3M82.9 41.9V43.5" stroke="#6fb0f2" stroke-width="1" fill="none"/>
</svg>
<svg x="225" y="437.9" width="85.6" height="48.1" viewBox="0 0 85.6 48" preserveAspectRatio="none" overflow="hidden">
<defs><filter id="t3b" x="-20%" y="-20%" width="140%" height="140%"><feGaussianBlur stdDeviation="0.9"/></filter>
<filter id="t3n" x="0" y="0" width="100%" height="100%">
<feTurbulence type="fractalNoise" baseFrequency="0.42" numOctaves="4" seed="7" result="t"/>
<feColorMatrix in="t" type="matrix" values="0 0 0 0 0  0 0 0 0 0  0 0 0 0 0  1.9 0 0 0 -0.7"/>
<feComposite in2="SourceGraphic" operator="in"/>
</filter><linearGradient id="t3s" x1="0" y1="0" x2="0" y2="1"><stop offset="0" stop-color="#a6b9d7"/><stop offset="0.22" stop-color="#c0cee2"/><stop offset="0.41" stop-color="#dde2e8"/><stop offset="0.43" stop-color="#a5aeb8"/><stop offset="0.6" stop-color="#b2b9c0"/><stop offset="0.8" stop-color="#cacdd0"/><stop offset="1" stop-color="#bfc3c6"/></linearGradient>
<clipPath id="t3c"><path d="M-1 23 L8 25 L14 28 L0 31 L-1 34 L20 34 L30 38 L46 42 L58 46 L60 49 L-1 49 Z"/></clipPath></defs>
<rect width="86" height="48" fill="url(#t3s)"/>
<g fill="#f3f5f8" filter="url(#t3b)"><ellipse cx="18" cy="3.6" rx="8.5" ry="2.8"/><ellipse cx="5" cy="10" rx="10" ry="2.8"/><ellipse cx="51" cy="4.4" rx="17" ry="3.4"/><ellipse cx="42" cy="11.2" rx="2.6" ry="1.2"/><ellipse cx="77" cy="4" rx="6" ry="2"/></g>
<g filter="url(#t3b)">
<path d="M36 30 Q52 27 76 31 L86 33 L86 41 L56 42 L40 38 Z" fill="#d4d7d9"/>
<path d="M0 31 Q10 28 21 27 L15 31 L2 34 Z" fill="#eceef0"/>
<path d="M18 35 Q26 32 34 34 L46 38 L60 42 L64 47 L50 44 L34 40 Z" fill="#e2e4e6"/>
<path d="M-2 23 L6 25 L14 28 L8 30 L-2 30 Z" fill="#4f5254"/>
<path d="M-2 34 L10 35 L22 34 L27 38 L38 40 L50 43 L58 46 L60 50 L-2 50 Z" fill="#4f5150"/>
<path d="M-2 37 L8 38 L18 42 L30 45 L38 50 L-2 50 Z" fill="#8c8a36"/>
</g>
<rect width="86" height="48" fill="#10150c" filter="url(#t3n)" opacity="0.4" clip-path="url(#t3c)"/>
<rect x="61" y="37.5" width="11.6" height="10.4" fill="#2a62a4" stroke="#4f97e3" stroke-width="0.8"/><rect x="73.7" y="37.5" width="11.6" height="10.4" fill="#2a62a4" stroke="#4f97e3" stroke-width="0.8"/><g fill="#6fb0f2"><rect x="63" y="40.7" width="2" height="4"/><rect x="65.8" y="40.7" width="2" height="4"/><rect x="68.6" y="40.7" width="2" height="4"/></g><path d="M74.9 42.7H84.10000000000001M76.7 40.9V44.5M78.3 41.7V43.7M79.9 40.3V45.1M81.5 41.1V44.3M82.9 41.9V43.5" stroke="#6fb0f2" stroke-width="1" fill="none"/>
</svg>
<svg x="21.9" y="518" width="85.6" height="10.6" viewBox="0 0 86 12" preserveAspectRatio="none" overflow="hidden">
<defs><linearGradient id="s4g" x1="0" y1="0" x2="1" y2="1"><stop offset="0" stop-color="#d3dcea"/><stop offset="1" stop-color="#c2cde0"/></linearGradient></defs>
<rect width="86" height="12" fill="url(#s4g)"/></svg>
<svg x="123.4" y="518" width="85.6" height="10.6" viewBox="0 0 86 12" preserveAspectRatio="none" overflow="hidden">
<defs><linearGradient id="s5g" x1="0" y1="0" x2="1" y2="1"><stop offset="0" stop-color="#c4cad8"/><stop offset="1" stop-color="#cfd4de"/></linearGradient></defs>
<rect width="86" height="12" fill="url(#s5g)"/></svg>
<svg x="225" y="518" width="85.6" height="10.6" viewBox="0 0 86 12" preserveAspectRatio="none" overflow="hidden">
<defs><linearGradient id="s6g" x1="0" y1="0" x2="1" y2="1"><stop offset="0" stop-color="#c8c8c8"/><stop offset="1" stop-color="#ececec"/></linearGradient></defs>
<rect width="86" height="12" fill="url(#s6g)"/></svg>
<rect x="220.8" y="434.2" width="94.6" height="73.6" rx="2.6" fill="none" stroke="#4a90e2" stroke-width="1.4"/>
<g transform="translate(16.9 540)" ><path d="M0 10L0.8 6.4L7.2 0L10 2.8L3.6 9.2Z" fill="#4fc08a"/><path d="M0.8 6.6L3.4 9.2" stroke="#1d1d1d" stroke-width="0.6"/></g>
<g transform="translate(39 541)" ><rect x="0" y="0" width="3.4" height="3.2" fill="#c4c4c4"/><rect x="0" y="4.4" width="3.4" height="3.2" fill="#c4c4c4"/><rect x="5.4" y="1.1" width="6.8" height="1.1" fill="#9a9a9a"/><rect x="5.4" y="5.5" width="6.8" height="1.1" fill="#9a9a9a"/></g>
<g transform="translate(65 540.6)" ><rect x="0" y="0" width="7.6" height="5.6" fill="#e4e4e4"/><rect x="0" y="6.8" width="7.6" height="1.2" fill="#a8a8a8"/></g>
<g transform="translate(85.4 541)" ><rect x="0" y="0" width="5" height="4" fill="#8c8c8c"/><rect x="3" y="1.4" width="6" height="4.6" fill="#a4a4a4" stroke="#1d1d1d" stroke-width="0.6"/><rect x="6.2" y="3" width="7.4" height="4.8" fill="#c4c4c4" stroke="#1d1d1d" stroke-width="0.6"/></g>
<rect x="122.2" y="544.1" width="39" height="1" fill="#5a5a5a"/>
<circle cx="115.6" cy="544.6" r="3" fill="#1b1b1b" stroke="#e2e2e2" stroke-width="1.3"/>
<g transform="translate(181 540.5)" ><rect x="0" y="0.00" width="9" height="1.3" fill="#c4c4c4"/><rect x="0" y="3.35" width="7.6" height="1.3" fill="#c4c4c4"/><rect x="0" y="6.70" width="6.2" height="1.3" fill="#c4c4c4"/></g>
<g transform="translate(222.9 541.5)" ><rect x="0" y="0" width="2.8" height="6.4" fill="#c4c4c4"/><rect x="3.6" y="0" width="2.8" height="6.4" fill="#c4c4c4"/><rect x="7.2" y="0.6" width="2" height="5.8" fill="#9a9a9a"/><rect x="9.9" y="1.4" width="1.3" height="5" fill="#8a8a8a"/></g>
<circle cx="253" cy="543.2" r="3" fill="none" stroke="#c4c4c4" stroke-width="1.2"/><path d="M250.84 545.36L247.64000000000001 548.5600000000001" stroke="#c4c4c4" stroke-width="1.4" stroke-linecap="round"/>
<g transform="translate(270 540.4)" ><path d="M0 0.6H3.6719999999999997L4.4879999999999995 1.8H10.2V7.8H0Z" fill="#b4b4b4"/></g>
<g transform="translate(295 540.5)" ><path d="M0 0H8V7.6H3.4V3.4H0Z" fill="#c4c4c4"/><path d="M0.4 4.4H2.6V6.8" fill="none" stroke="#8a8a8a" stroke-width="0.8"/></g>
<g transform="translate(317.8 539.5)" ><rect x="0" y="1.6" width="8.4" height="1.2" fill="#9a9a9a"/><rect x="2.8" y="0" width="2.8" height="1.4" fill="#9a9a9a"/><path d="M0.9 3.4H7.5L7 9.6H1.4Z" fill="#9a9a9a"/><path d="M3 4.4V8.6M5.4 4.4V8.6" stroke="#1d1d1d" stroke-width="0.7"/></g>
<g transform="translate(359.2 377.8)" ><path d="M0 0L10 6.4L5.2 7.2L2.4 11.8Z" fill="#fff"/></g>
<g transform="translate(357 402.2)" ><rect x="0.5" y="0.5" width="7.4" height="7.8" fill="none" stroke="#bdbdbd" stroke-width="1" stroke-dasharray="1.6 1.3"/><path d="M5 3.2H9.4V1.4L13 4.4L9.4 7.4V5.6H5Z" fill="#bdbdbd"/></g>
<path d="M368.6 414.8L371.0 412.40000000000003V414.8Z" fill="#9a9a9a"/>
<g transform="translate(356.8 424.8)" ><rect x="6.2" y="0" width="1.6" height="10.4" fill="#bdbdbd"/><path d="M0 5.2L5 2.2V8.2Z M14 5.2L9 2.2V8.2Z" fill="#bdbdbd"/></g>
<path d="M368.6 438L371.0 435.6V438Z" fill="#9a9a9a"/>
<g transform="translate(363.8 454.2) rotate(40)"><rect x="-5.4" y="-3" width="10.8" height="6" rx="0.6" fill="#bdbdbd"/><rect x="-3.4" y="-0.5" width="6.8" height="1" fill="#1d1d1d"/><rect x="-0.5" y="-1.4" width="1" height="2.8" fill="#1d1d1d"/></g>
<g transform="translate(356.4 472.4)" ><rect x="0" y="0" width="1.3" height="10.6" fill="#bdbdbd"/><rect x="13.4" y="0" width="1.3" height="10.6" fill="#bdbdbd"/><path d="M2.4 5.3L5.8 3V4.7H8.9V3L12.3 5.3L8.9 7.6V5.9H5.8V7.6Z" fill="#bdbdbd"/></g>
<path d="M368.6 484.6L371.0 482.20000000000005V484.6Z" fill="#9a9a9a"/>
<g transform="translate(363.6 501.2) rotate(45)"><rect x="-2.6" y="-7.4" width="5.2" height="2.6" fill="#c4c4c4"/><path d="M-2.8 -4.2H2.8L3.6 1.2L0 7.6L-3.6 1.2Z" fill="#c4c4c4"/><path d="M0 7L0 2.4" stroke="#1d1d1d" stroke-width="0.8"/><circle cx="0" cy="1.8" r="0.9" fill="#1d1d1d"/></g>
<rect x="358.5" y="519.5" width="11" height="9" fill="#3c3c3c" stroke="#b0b0b0" stroke-width="1"/>
<path d="M368.8 532L371.2 529.6V532Z" fill="#9a9a9a"/>
<g transform="translate(357.8 540.9)" ><path d="M3.4 6.4V2.4Q3.4 1.4 4.2 1.4Q5 1.4 5 2.4V1.2Q5 0.2 5.8 0.2Q6.7 0.2 6.7 1.2V1.8Q6.7 0.9 7.5 0.9Q8.4 0.9 8.4 1.9V3Q8.4 2.2 9.2 2.2Q10 2.2 10 3.2V8Q10 12.4 6.4 12.4Q4.4 12.4 3.2 10.6L0.4 6.6Q0 5.8 0.7 5.4Q1.4 5.1 2 5.7Z" fill="#c0c0c0"/></g>
<path d="M368.8 555.8L371.2 553.4V555.8Z" fill="#9a9a9a"/>
<path d="M394.6 370.2L398.2 373.8M398.2 370.2L394.6 373.8" stroke="#b0b0b0" stroke-width="0.9"/>
<g transform="translate(399.8 404.6)" ><rect x="4.6" y="0.8" width="1.2" height="9.4" fill="#e0e0e0"/><circle cx="5.2" cy="0.9" r="0.9" fill="#e0e0e0"/><path d="M0 3.6H3.6M0.6 5.6H3.6M0 7.8H3.6M6.8 3.6H10.4M6.8 5.6H9.8M6.8 7.8H10.4" stroke="#e0e0e0" stroke-width="1.1"/></g>
<g transform="translate(424 405.4)" ><path d="M1.1 8.8V4.4A3.3 3.3 0 0 1 7.7 4.4V8.8" fill="none" stroke="#e0e0e0" stroke-width="2"/><rect x="0" y="7.2" width="2.2" height="1.8" fill="#9a9a9a"/><rect x="6.6" y="7.2" width="2.2" height="1.8" fill="#9a9a9a"/></g>
<g transform="translate(446.4 405)" ><rect x="0" y="0.4" width="3" height="3" fill="#e0e0e0"/><rect x="4" y="0.4" width="7" height="3" fill="#e0e0e0"/><rect x="0" y="4.6" width="3" height="4.4" fill="none" stroke="#e0e0e0" stroke-width="0.8"/><path d="M4 1.2L10.6 6.6L7.2 7L5.6 10.2Z" fill="#e0e0e0" stroke="#444" stroke-width="0.5"/></g>
<g transform="translate(471.8 406.6)" ><path d="M0 0.6Q0 0 0.6 0H5.800000000000001Q6.4 0 6.4 0.6V3.74L3.2 6.8L0 3.74Z" fill="#b4b4b4"/></g>
<g transform="translate(493.4 404.6)" ><g transform="scale(1.0)"><path d="M3.4 0.2A3.3 3.3 0 0 0 0.2 4.6A3.3 3.3 0 0 0 4.6 6.3L8.6 10.2A1.2 1.2 0 0 0 10.3 8.5L6.3 4.6A3.3 3.3 0 0 0 5.9 1.2L4.1 3L2.8 2.6L2.5 1.3L4.2 0.3Z" fill="#d0d0d0"/></g></g>
<g transform="translate(516 406.6)" ><rect x="0" y="0" width="11.8" height="7" rx="1.2" fill="#777"/><path d="M5 2.4Q2.6 1.2 2.4 3.5Q2.6 5.8 5 4.6M9.6 2.4Q7.2 1.2 7 3.5Q7.2 5.8 9.6 4.6" fill="none" stroke="#1d1d1d" stroke-width="1.1"/></g>
<g stroke="#2c2c2c" stroke-width="1"><path d="M387 424.5H536M387 433.5H745M387 463.5H745M387 514.5H745M536.2 424V545"/></g>
<rect x="387" y="482" width="358" height="2.6" fill="#2c2c2c"/>
<path d="M396.2 424.5H413.8V431.5Q413.8 433.2 412 433.2H398Q396.2 433.2 396.2 431.5Z" fill="#2962c9"/>
<path d="M431.2 482V466Q431.2 464 433.2 464H446.8Q448.8 464 448.8 466V482Z" fill="#2962c9"/>
<rect x="396.2" y="484.8" width="17.6" height="29" rx="2" fill="#2962c9"/>
<rect x="431.2" y="484.8" width="17.6" height="29" rx="2" fill="#2962c9"/>
<path d="M431.2 541.5V517Q431.2 515 433.2 515H446.8Q448.8 515 448.8 517V541.5Z" fill="#2962c9"/>
<path d="M543.80 419.2V423M552.97 419.2V423M562.14 419.2V423M571.31 419.2V423M580.48 419.2V423M589.65 419.2V423M598.82 419.2V423M607.99 419.2V423M617.16 419.2V423M626.33 419.2V423M635.50 419.2V423M644.67 419.2V423M653.84 419.2V423M663.01 419.2V423M672.18 419.2V423M681.35 419.2V423M690.52 419.2V423M699.69 419.2V423M708.86 419.2V423M718.03 419.2V423M727.20 419.2V423M736.37 419.2V423" stroke="#a8a8a8" stroke-width="0.7"/>
<rect x="535.6" y="422.9" width="200.6" height="2.4" fill="#d4ca3e"/>
<rect x="536.5" y="434.1" width="71.6" height="29.2" rx="1.5" fill="#1d5474"/>
<rect x="536.5" y="445.3" width="71.6" height="0.9" fill="#c4c9cc"/>
<rect x="536.5" y="464" width="199.6" height="18" fill="#1d5474"/>
<rect x="536.5" y="475.5" width="199.6" height="0.9" fill="#c4c9cc"/>
<rect x="552" y="476.9" width="29.2" height="5.1" fill="#c9d6c2"/>
<path d="M552 480L558 477.5L566 479.5L573 477L581 479V482H552Z" fill="#9fba9a"/>
<rect x="683.2" y="477.2" width="30.8" height="4.4" fill="#ffffff"/>
<path d="M549.8 482V464.5H682V482" fill="none" stroke="#d6d6d6" stroke-width="1.1"/>
<path d="M683.2 464.2H686L683.2 467Z" fill="#f0f0f0"/>
<path d="M549.4 464.2H552.2L549.4 467Z" fill="#f0f0f0"/>
<rect x="536.5" y="484.8" width="199.6" height="29" fill="#1d5474"/>
<rect x="536.5" y="500.6" width="71.6" height="3.2" fill="#6cb9f2"/>
<path d="M536.5 500.8 L536.5 500.0 L537.3 499.8 L538.1 500.2 L538.9 499.9 L539.7 499.5 L540.5 500.2 L541.3 500.2 L542.1 499.2 L542.9 499.9 L543.7 500.2 L544.5 498.8 L545.3 498.9 L546.1 497.9 L546.9 498.0 L547.7 497.6 L548.5 498.6 L549.3 498.2 L550.1 497.6 L550.9 497.6 L551.7 497.6 L552.5 497.6 L553.3 498.9 L554.1 498.1 L554.9 497.8 L555.7 498.4 L556.5 499.8 L557.3 498.7 L558.1 498.8 L558.9 498.2 L559.7 497.6 L560.5 497.6 L561.3 497.6 L562.1 497.9 L562.9 497.6 L563.7 497.8 L564.5 497.6 L565.3 497.6 L566.1 498.8 L566.9 499.8 L567.7 500.2 L568.5 498.9 L569.3 499.0 L570.1 498.7 L570.9 499.3 L571.7 499.2 L572.5 499.6 L573.3 500.0 L574.1 499.7 L574.9 499.5 L575.7 498.3 L576.5 497.8 L577.3 497.6 L578.1 497.6 L578.9 497.6 L579.7 497.6 L580.5 498.6 L581.3 497.6 L582.1 497.6 L582.9 497.6 L583.7 497.6 L584.5 497.6 L585.3 498.4 L586.1 497.6 L586.9 497.6 L587.7 498.2 L588.5 499.5 L589.3 498.5 L590.1 497.6 L590.9 498.8 L591.7 497.9 L592.5 498.2 L593.3 499.2 L594.1 499.8 L594.9 499.0 L595.7 497.9 L596.5 499.2 L597.3 498.9 L598.1 500.2 L598.9 499.6 L599.7 500.1 L600.5 499.0 L601.3 497.6 L602.1 497.6 L602.9 497.6 L603.7 498.1 L604.5 499.4 L605.3 499.1 L606.1 500.2 L606.9 500.2 L607.7 500.2 L608.0 500.8 Z" fill="#6cb9f2"/>
<path d="M536.5 513.8 L536.5 509.5 L537.3 508.0 L538.1 506.8 L538.9 506.8 L539.7 506.8 L540.5 506.8 L541.3 509.8 L542.1 510.0 L542.9 507.2 L543.7 506.8 L544.5 506.8 L545.3 509.2 L546.1 509.4 L546.9 510.6 L547.7 510.3 L548.5 509.9 L549.3 510.6 L550.1 510.6 L550.9 510.6 L551.7 508.0 L552.5 506.8 L553.3 508.9 L554.1 507.1 L554.9 509.3 L555.7 508.6 L556.5 510.6 L557.3 510.6 L558.1 508.3 L558.9 510.1 L559.7 510.6 L560.5 507.6 L561.3 506.8 L562.1 508.1 L562.9 506.8 L563.7 506.8 L564.5 506.8 L565.3 508.7 L566.1 506.8 L566.9 506.8 L567.7 506.8 L568.5 506.8 L569.3 508.1 L570.1 508.9 L570.9 510.6 L571.7 510.6 L572.5 510.6 L573.3 510.6 L574.1 510.0 L574.9 510.6 L575.7 509.5 L576.5 510.5 L577.3 510.6 L578.1 508.6 L578.9 508.7 L579.7 509.9 L580.5 510.0 L581.3 508.7 L582.1 510.6 L582.9 507.6 L583.7 510.6 L584.5 509.0 L585.3 506.9 L586.1 509.9 L586.9 508.1 L587.7 508.9 L588.5 508.4 L589.3 510.6 L590.1 510.6 L590.9 510.6 L591.7 507.7 L592.5 509.6 L593.3 508.0 L594.1 506.8 L594.9 506.8 L595.7 507.8 L596.5 508.7 L597.3 508.5 L598.1 506.8 L598.9 509.3 L599.7 507.7 L600.5 506.8 L601.3 506.8 L602.1 509.7 L602.9 506.9 L603.7 509.5 L604.5 510.5 L605.3 509.8 L606.1 507.2 L606.9 508.2 L607.7 506.8 L608.0 513.8 Z" fill="#6cb9f2"/>
<rect x="536.5" y="500" width="71.6" height="0.8" fill="#d2d6d8"/>
<path d="M683.2 505.0 L683.2 500.5 L684.0 497.2 L684.8 499.9 L685.6 498.4 L686.4 500.5 L687.2 500.5 L688.0 497.0 L688.8 499.1 L689.6 498.1 L690.4 498.4 L691.2 498.7 L692.0 498.7 L692.8 500.5 L693.6 498.1 L694.4 500.5 L695.2 500.5 L696.0 500.5 L696.8 500.5 L697.6 500.5 L698.4 497.6 L699.2 498.5 L700.0 500.5 L700.8 500.5 L701.6 497.0 L702.4 500.1 L703.2 499.3 L704.0 500.2 L704.8 499.0 L705.6 500.2 L706.4 498.8 L707.2 498.8 L708.0 497.7 L708.8 497.0 L709.6 497.0 L710.4 499.6 L711.2 500.5 L712.0 497.3 L712.8 497.4 L713.6 499.6 L714.4 497.0 L715.2 497.0 L716.0 497.0 L716.8 497.0 L717.6 498.5 L718.4 499.6 L719.2 497.0 L720.0 499.6 L720.8 497.7 L721.6 500.5 L722.4 499.1 L723.2 497.7 L724.0 497.0 L724.8 497.0 L725.6 497.0 L726.4 499.2 L727.2 500.5 L728.0 500.3 L728.8 500.2 L729.6 500.5 L730.4 497.6 L731.2 497.5 L732.0 497.0 L732.8 499.0 L733.6 500.5 L734.4 500.5 L735.2 500.5 L736.0 500.5 L736.0 505.0 Z " fill="#6cb9f2"/>
<rect x="683.2" y="504.5" width="52.9" height="9.3" fill="#6cb9f2"/>
<path d="M683.2 507.6 L683.2 508.3 L684.0 508.2 L684.8 507.9 L685.6 508.4 L686.4 507.9 L687.2 507.9 L688.0 508.5 L688.8 507.9 L689.6 508.0 L690.4 508.1 L691.2 507.9 L692.0 507.9 L692.8 508.2 L693.6 508.1 L694.4 508.4 L695.2 508.0 L696.0 507.9 L696.8 507.9 L697.6 507.9 L698.4 508.5 L699.2 508.6 L700.0 509.0 L700.8 508.9 L701.6 509.2 L702.4 508.6 L703.2 508.3 L704.0 508.6 L704.8 508.9 L705.6 508.8 L706.4 508.2 L707.2 507.9 L708.0 507.9 L708.8 507.9 L709.6 508.3 L710.4 507.9 L711.2 508.5 L712.0 509.0 L712.8 508.4 L713.6 508.2 L714.4 508.2 L715.2 507.9 L716.0 507.9 L716.8 508.5 L717.6 507.9 L718.4 508.1 L719.2 507.9 L720.0 508.0 L720.8 508.6 L721.6 508.2 L722.4 507.9 L723.2 507.9 L724.0 508.0 L724.8 507.9 L725.6 507.9 L726.4 507.9 L727.2 508.5 L728.0 508.4 L728.8 508.2 L729.6 508.4 L730.4 507.9 L731.2 508.0 L732.0 507.9 L732.8 508.1 L733.6 508.7 L734.4 508.1 L735.2 508.2 L736.0 508.3 L736.0 507.6 Z" fill="#2a6a92"/>
<rect x="683.2" y="507.1" width="52.9" height="0.8" fill="#b4b8ba"/>
<path d="M611.0 501.5 L611.0 500.9 L611.8 500.8 L612.6 500.6 L613.4 501.0 L614.2 501.3 L615.0 501.3 L615.8 501.3 L616.6 501.0 L617.4 500.8 L618.2 500.6 L619.0 500.6 L619.8 500.4 L620.6 500.8 L621.4 500.9 L622.2 501.2 L623.0 500.8 L623.8 501.3 L624.6 500.9 L625.4 501.3 L626.2 501.1 L627.0 501.3 L627.8 501.3 L628.6 500.9 L629.4 501.3 L630.2 501.3 L631.0 500.9 L631.8 500.8 L632.6 501.3 L633.4 500.8 L634.2 500.3 L635.0 500.7 L635.8 500.8 L636.6 501.2 L637.4 501.3 L638.2 501.2 L639.0 501.3 L639.8 501.1 L640.6 501.3 L641.4 501.3 L642.2 501.0 L643.0 501.1 L643.8 501.2 L644.6 501.1 L645.4 501.1 L646.2 501.2 L647.0 501.3 L647.8 501.1 L648.6 500.6 L649.4 500.3 L650.2 500.3 L651.0 500.5 L651.8 500.6 L652.6 500.4 L653.4 500.3 L654.2 500.7 L655.0 501.0 L655.8 501.2 L656.6 501.1 L657.4 500.8 L658.2 500.8 L659.0 501.3 L659.8 501.0 L660.6 501.0 L661.4 501.0 L662.2 501.3 L663.0 501.3 L663.8 501.3 L664.6 501.0 L665.4 501.3 L666.2 501.2 L667.0 501.3 L667.8 501.1 L668.6 501.3 L669.4 501.3 L670.2 501.3 L671.0 501.2 L671.8 501.3 L672.6 501.3 L673.4 501.3 L674.2 501.3 L675.0 501.3 L675.8 500.8 L676.6 500.8 L677.4 500.3 L678.2 500.7 L679.0 500.3 L679.8 500.4 L680.6 500.8 L681.0 501.5 Z" fill="#6cb9f2" opacity="0.8"/>
<rect x="610" y="501.2" width="71" height="1.4" fill="#6cb9f2" opacity="0.8"/>
<path d="M659 501.5L660.5 497.5L662 497L663.5 500L665 501.5Z M659 513L660.5 507L662 506.5L663.5 510L665 513Z M669 513L671 511L673 513Z" fill="#6cb9f2"/>
<rect x="610" y="499.9" width="71" height="0.9" fill="#c9cdd0"/>
<rect x="609.1" y="485.3" width="72.8" height="28.3" rx="1" fill="none" stroke="#d6d6d6" stroke-width="1.2"/>
<path d="M683.2 485H686L683.2 487.8Z" fill="#f0f0f0"/>
<rect x="614.4" y="497" width="6.8" height="6.8" fill="#8c8c8c" stroke="#3a3a3a" stroke-width="0.5"/>
<rect x="670.0" y="497" width="6.8" height="6.8" fill="#8c8c8c" stroke="#3a3a3a" stroke-width="0.5"/>
<path d="M614.4 503.8L621.2 497V503.8Z" fill="#5f5f5f"/>
<path d="M670 497H676.8V503.8Z" fill="#5f5f5f"/>
<polygon points="582.00,486.90 582.78,489.11 584.90,488.10 583.89,490.22 586.10,491.00 583.89,491.78 584.90,493.90 582.78,492.89 582.00,495.10 581.22,492.89 579.10,493.90 580.11,491.78 577.90,491.00 580.11,490.22 579.10,488.10 581.22,489.11" fill="#f4f4f4"/>
<polygon points="655.60,486.90 656.38,489.11 658.50,488.10 657.49,490.22 659.70,491.00 657.49,491.78 658.50,493.90 656.38,492.89 655.60,495.10 654.82,492.89 652.70,493.90 653.71,491.78 651.50,491.00 653.71,490.22 652.70,488.10 654.82,489.11" fill="#f4f4f4"/>
<polygon points="709.00,486.90 709.78,489.11 711.90,488.10 710.89,490.22 713.10,491.00 710.89,491.78 711.90,493.90 709.78,492.89 709.00,495.10 708.22,492.89 706.10,493.90 707.11,491.78 704.90,491.00 707.11,490.22 706.10,488.10 708.22,489.11" fill="#f4f4f4"/>
<rect x="737.8" y="431" width="5.4" height="45.5" fill="#4a4a4a"/>
<rect x="737.8" y="488" width="5.4" height="47" fill="#4a4a4a"/>
<rect x="737.8" y="535" width="5.4" height="7" rx="2.5" fill="#2c2c2c"/>
<circle cx="740.5" cy="431" r="3" fill="#1b1b1b" stroke="#e2e2e2" stroke-width="1.3"/>
<circle cx="740.5" cy="476.6" r="3" fill="#1b1b1b" stroke="#e2e2e2" stroke-width="1.3"/>
<circle cx="740.5" cy="488.2" r="3" fill="#1b1b1b" stroke="#e2e2e2" stroke-width="1.3"/>
<circle cx="740.5" cy="535.5" r="3" fill="#1b1b1b" stroke="#e2e2e2" stroke-width="1.3"/>
<rect x="397" y="543" width="338" height="7" rx="3.5" fill="#2a2a2a"/>
<rect x="404" y="543" width="95" height="7" rx="3.5" fill="#484848"/>
<circle cx="407" cy="546.5" r="3" fill="#1b1b1b" stroke="#e2e2e2" stroke-width="1.3"/>
<circle cx="496.3" cy="546.5" r="3" fill="#1b1b1b" stroke="#e2e2e2" stroke-width="1.3"/>
<rect x="633" y="420" width="1" height="121.5" fill="#4b86dc"/>
<path d="M629 415.5Q629 414.5 630 414.5H636.2Q637.2 414.5 637.2 415.5V420L633.5 423.4H632.7L629 420Z" fill="#4f97ec"/>
<rect x="766.5" y="383" width="15.8" height="150" fill="#000"/>
<path d="M774.4 383V390M766.5 389.8H782.3" stroke="#1d1d1d" stroke-width="1"/>
<rect x="766.5" y="533" width="7.4" height="1.8" fill="#8a8432"/><rect x="775" y="533" width="7.3" height="1.8" fill="#8a8432"/>
<g transform="translate(419 443.4)" ><rect x="0" y="4.2" width="7.8" height="5.3" rx="0.7" fill="#c4c4c4"/><rect x="3" y="6" width="1.8" height="2" fill="#1d1d1d"/><path d="M1.4 4.2V2.8A2.3 2.3 0 0 1 5.6 1.6" fill="none" stroke="#c4c4c4" stroke-width="1"/></g>
<g transform="translate(419 473)" ><rect x="0" y="4.2" width="7.8" height="5.3" rx="0.7" fill="#c4c4c4"/><rect x="3" y="6" width="1.8" height="2" fill="#1d1d1d"/><path d="M1.4 4.2V2.8A2.3 2.3 0 0 1 5.6 1.6" fill="none" stroke="#c4c4c4" stroke-width="1"/></g>
<g transform="translate(419 494.2)" ><rect x="0" y="4.2" width="7.8" height="5.3" rx="0.7" fill="#c4c4c4"/><rect x="3" y="6" width="1.8" height="2" fill="#1d1d1d"/><path d="M1.4 4.2V2.8A2.3 2.3 0 0 1 5.6 1.6" fill="none" stroke="#c4c4c4" stroke-width="1"/></g>
<g transform="translate(419 524.4)" ><rect x="0" y="4.2" width="7.8" height="5.3" rx="0.7" fill="#c4c4c4"/><rect x="3" y="6" width="1.8" height="2" fill="#1d1d1d"/><path d="M1.4 4.2V2.8A2.3 2.3 0 0 1 5.6 1.6" fill="none" stroke="#c4c4c4" stroke-width="1"/></g>
<g transform="translate(453 439.4)" ><rect x="0.5" y="0.5" width="6.2" height="2.2" fill="none" stroke="#bdbdbd" stroke-width="0.9"/><rect x="0.5" y="3.8" width="6.2" height="2.2" fill="none" stroke="#bdbdbd" stroke-width="0.9"/><path d="M6.7 1.6H8.6V4.9H6.7" fill="none" stroke="#bdbdbd" stroke-width="0.9"/></g>
<g transform="translate(453 469.4)" ><rect x="0.5" y="0.5" width="6.2" height="2.2" fill="none" stroke="#bdbdbd" stroke-width="0.9"/><rect x="0.5" y="3.8" width="6.2" height="2.2" fill="none" stroke="#bdbdbd" stroke-width="0.9"/><path d="M6.7 1.6H8.6V4.9H6.7" fill="none" stroke="#bdbdbd" stroke-width="0.9"/></g>
<g transform="translate(453 490)" ><rect x="0.5" y="0.5" width="6.2" height="2.2" fill="none" stroke="#bdbdbd" stroke-width="0.9"/><rect x="0.5" y="3.8" width="6.2" height="2.2" fill="none" stroke="#bdbdbd" stroke-width="0.9"/><path d="M6.7 1.6H8.6V4.9H6.7" fill="none" stroke="#bdbdbd" stroke-width="0.9"/></g>
<g transform="translate(453 520)" ><rect x="0.5" y="0.5" width="6.2" height="2.2" fill="none" stroke="#bdbdbd" stroke-width="0.9"/><rect x="0.5" y="3.8" width="6.2" height="2.2" fill="none" stroke="#bdbdbd" stroke-width="0.9"/><path d="M6.7 1.6H8.6V4.9H6.7" fill="none" stroke="#bdbdbd" stroke-width="0.9"/></g>
<g transform="translate(470 440.6)" ><path d="M0 3Q4.8 -2.2 9.6 3Q4.8 8.2 0 3Z" fill="#d0d0d0"/><circle cx="4.8" cy="3" r="1.9" fill="#1d1d1d"/><circle cx="4.8" cy="3" r="0.9" fill="#d0d0d0"/></g>
<g transform="translate(470 470.4)" ><path d="M0 3Q4.8 -2.2 9.6 3Q4.8 8.2 0 3Z" fill="#d0d0d0"/><circle cx="4.8" cy="3" r="1.9" fill="#1d1d1d"/><circle cx="4.8" cy="3" r="0.9" fill="#d0d0d0"/></g>
<g transform="translate(506.4 488.6)" ><rect x="1.6" y="0" width="3.4" height="6.6" rx="1.7" fill="#bdbdbd"/><path d="M0.4 4.4V5A2.9 2.9 0 0 0 6.2 5V4.4M3.3 8V10M1.4 10.2H5.2" fill="none" stroke="#bdbdbd" stroke-width="0.8"/></g>
<g transform="translate(506.4 518.6)" ><rect x="1.6" y="0" width="3.4" height="6.6" rx="1.7" fill="#bdbdbd"/><path d="M0.4 4.4V5A2.9 2.9 0 0 0 6.2 5V4.4M3.3 8V10M1.4 10.2H5.2" fill="none" stroke="#bdbdbd" stroke-width="0.8"/></g>
<rect x="387" y="482" width="358" height="2.6" fill="#2c2c2c"/>
<g transform="translate(881 41)" ><path d="M0 0.4H5.8M0 2.7H5.8M0 5H5.8" stroke="#b4b4b4" stroke-width="0.9" fill="none"/></g>
<rect x="873.1" y="71" width="10.8" height="9.8" rx="1.6" fill="#c8c8c8"/>
<g transform="translate(807.8 100.2)" ><path d="M0 0H10L6.2 4.6V9L3.8 10.5V4.6Z" fill="#f0f0f0"/></g>
<circle cx="836" cy="104" r="2.6" fill="none" stroke="#b4b4b4" stroke-width="1"/><path d="M837.872 105.872L841.072 109.072" stroke="#b4b4b4" stroke-width="1.2" stroke-linecap="round"/>
<g transform="translate(840.6 105.6)" ><path d="M0 0L1.7 1.8L3.4 0" stroke="#b4b4b4" stroke-width="0.9" fill="none" stroke-linejoin="round" stroke-linecap="round"/></g>
<polygon points="952.20,99.60 953.68,103.56 957.91,103.75 954.60,106.38 955.73,110.45 952.20,108.12 948.67,110.45 949.80,106.38 946.49,103.75 950.72,103.56" fill="#c8c8c8"/>
<g transform="translate(970.8 101.4)" ><rect x="0" y="0.00" width="9.6" height="1.3" fill="#c4c4c4"/><rect x="0" y="3.35" width="8" height="1.3" fill="#c4c4c4"/><rect x="0" y="6.70" width="6.4" height="1.3" fill="#c4c4c4"/></g>
<g transform="translate(993.6 100.2)" ><path d="M6 8.2H0.5V0.5H9.6V4.4" fill="none" stroke="#c4c4c4" stroke-width="1"/><circle cx="8.4" cy="7.4" r="2.9" fill="#1d1d1d" stroke="#c4c4c4" stroke-width="1"/><path d="M6.8 7.4H10M8.4 5.8V9" stroke="#c4c4c4" stroke-width="1"/></g>
<g transform="translate(808.4 127)" ><path d="M0 0L4.2 3.4L0 6.8" stroke="#d4d4d4" stroke-width="1.3" fill="none" stroke-linejoin="round" stroke-linecap="round"/></g>
<rect x="822.2" y="126.6" width="7.3999999999999995" height="7.3999999999999995" rx="1.3" fill="#111" stroke="#cacaca" stroke-width="1.35"/>
<path d="M991.8000000000001 130.3H999.4M995.6 126.50000000000001V134.10000000000002" stroke="#e4e4e4" stroke-width="1.8" fill="none"/>
<g transform="translate(808.4 146)" ><path d="M0 0L4.2 3.4L0 6.8" stroke="#d4d4d4" stroke-width="1.3" fill="none" stroke-linejoin="round" stroke-linecap="round"/></g>
<rect x="822.2" y="145.6" width="7.3999999999999995" height="7.3999999999999995" rx="1.3" fill="#111" stroke="#cacaca" stroke-width="1.35"/>
<svg x="832" y="426" width="132" height="74.7" viewBox="0 0 132 74.7" preserveAspectRatio="none" overflow="hidden">
<defs>
<radialGradient id="nwbg" cx="0.25" cy="0.4" r="0.9"><stop offset="0" stop-color="#f4f7fb"/><stop offset="0.5" stop-color="#dde7f2"/><stop offset="1" stop-color="#b9cce4"/></radialGradient>
<radialGradient id="nwgl" cx="0.4" cy="0.4" r="0.7"><stop offset="0" stop-color="#ffffff"/><stop offset="0.7" stop-color="#eef3f9"/><stop offset="1" stop-color="#c3d2e6"/></radialGradient>
</defs>
<rect width="132" height="74.7" fill="url(#nwbg)"/>
<circle cx="30" cy="29" r="62" fill="none" stroke="#eef3f9" stroke-width="9" opacity="0.8"/>
<circle cx="30" cy="29" r="50" fill="none" stroke="#c9d8ea" stroke-width="5" opacity="0.8"/>
<circle cx="30" cy="29" r="44" fill="none" stroke="#f4f7fb" stroke-width="5"/>
<circle cx="32" cy="28" r="47" fill="none" stroke="#3c4656" stroke-width="0.6" opacity="0.8"/>
<circle cx="28" cy="26" r="40" fill="none" stroke="#d9534a" stroke-width="0.6"/>
<circle cx="60" cy="10" r="72" fill="none" stroke="#c9433b" stroke-width="1"/>
<circle cx="66" cy="4" r="84" fill="none" stroke="#4a5566" stroke-width="0.5"/>
<circle cx="30" cy="29" r="34.5" fill="#c5d3e6"/>
<circle cx="30" cy="29" r="33.5" fill="none" stroke="#4a5566" stroke-width="0.8"/>
<circle cx="29" cy="28" r="32" fill="url(#nwgl)"/>
<path d="M4.5 13.2 L6.3 10.1 L8.7 5.2 L11.5 2.4 L15.0 3.1 L18.6 1.4 L22.1 2.0 L26.3 0.6 L30.8 0.3 L36.1 0.6 L39.7 3.1 L42.5 6.6 L44.6 10.8 L47.1 16.5 L43.5 15.8 L40.4 12.9 L36.8 11.3 L33.3 11.8 L31.6 14.1 L34.7 15.8 L38.7 18.8 L42.5 21.4 L45.3 24.2 L49.1 27.3 L46.3 30.5 L43.5 29.5 L42.5 33.3 L41.5 37.6 L40.4 41.8 L39.2 44.6 L40.6 47.0 L37.8 48.1 L34.0 46.0 L29.8 47.0 L28.4 50.2 L31.6 52.0 L36.1 52.7 L40.4 52.0 L42.9 55.1 L36.8 54.6 L30.8 53.2 L26.6 51.2 L22.8 48.4 L18.6 44.6 L15.0 39.7 L12.2 34.0 L10.8 28.4 L10.3 22.8 L9.4 17.2 L6.3 15.2 Z" fill="#e5392d"/><path d="M29.1 20.7 L32.6 19.3 L36.1 20.7 L37.8 24.2 L36.1 27.3 L32.6 26.7 L29.8 24.9 Z M34.0 33.3 L37.6 32.6 L39.0 34.7 L36.1 36.1 Z" fill="#f4f7fa"/><path d="M42.5 56.8 L47.4 52.3 L53.0 49.2 L57.5 47.0 L55.8 50.9 L51.6 55.1 L47.4 57.7 Z M46.3 8.0 L48.1 7.6 L48.5 10.1 L47.1 10.8 Z" fill="#e5392d"/>
<text x="66.5" y="31.4" font-family="'Liberation Sans',sans-serif" font-weight="bold" font-size="8.6" fill="#4a4a48" textLength="15.5" lengthAdjust="spacingAndGlyphs">THE</text>
<text x="69.5" y="46.8" font-family="'Liberation Sans',sans-serif" font-weight="bold" font-size="18.4" fill="#3e3e3c" textLength="41.5" lengthAdjust="spacingAndGlyphs">SPIN</text>
<path d="M66.5 48.2 H112 L110.4 50.2 L110.4 48.9 H66.5 Z" fill="#c9332c" stroke="#c9332c" stroke-width="0.5"/>
</svg>
<g transform="translate(952.2 415)" ><rect x="0.4" y="0.4" width="10.2" height="8.8" fill="#111" stroke="#c9aa2a" stroke-width="0.8"/><path d="M2.2 2.4H6.6M4.4 2.4V7.2M3.4 7.2H5.4" stroke="#c9aa2a" stroke-width="0.9" fill="none"/><path d="M8.2 4.8L10.4 8.8H6Z" fill="#c9aa2a"/></g>
<rect x="809" y="540.6" width="25.4" height="1" fill="#5a5a5a"/><rect x="851.3" y="540.6" width="35.2" height="1" fill="#5a5a5a"/>
<circle cx="842.6" cy="541" r="3.9" fill="#1b1b1b" stroke="#e2e2e2" stroke-width="1.3"/>
</svg>
<span class="t" style="left:117.00px;top:8.87px;font-size:10.5px;transform:scaleX(0.9577);color:#d8d8d8;">Import</span>
<span class="t" style="left:164.00px;top:8.87px;font-size:10.5px;transform:scaleX(0.8843);color:#f0f0f0;">Edit</span>
<span class="t" style="left:197.00px;top:8.87px;font-size:10.5px;transform:scaleX(0.9226);color:#d8d8d8;">Export</span>
<span class="t" style="left:473.50px;top:8.87px;font-size:10.5px;transform:scaleX(0.8894);color:#d8d8d8;">Hiking '25 - Edited</span>
<span class="t" style="left:9.70px;top:33.70px;font-size:9px;transform:scaleX(0.8849);color:#f0f0f0;">Properties</span>
<span class="t" style="left:76.00px;top:33.70px;font-size:9px;transform:scaleX(0.8679);">Source: Hiking 4 4K.MOV</span>
<span class="t" style="left:198.00px;top:33.70px;font-size:9px;transform:scaleX(0.8834);">Effect Controls</span>
<span class="t" style="left:27.70px;top:60.10px;font-size:9px;transform:scaleX(0.9040);color:#e0e0e0;-webkit-text-stroke:0.35px currentColor;">Hiking 2 HD.MOV</span>
<span class="t" style="left:25.50px;top:90.40px;font-size:9px;transform:scaleX(0.8999);color:#e0e0e0;-webkit-text-stroke:0.35px currentColor;">Transform</span>
<span class="t" style="left:42.70px;top:113.00px;font-size:9px;transform:scaleX(0.8524);">Fill</span>
<span class="t" style="left:85.80px;top:113.00px;font-size:9px;transform:scaleX(0.8602);">Fit</span>
<span class="t" style="left:26.40px;top:137.00px;font-size:9px;transform:scaleX(0.8776);">Position</span>
<span class="t" style="left:26.40px;top:160.00px;font-size:9px;transform:scaleX(0.9142);">Anchor point</span>
<span class="t" style="left:26.40px;top:184.00px;font-size:9px;transform:scaleX(0.8780);">Scale</span>
<span class="t" style="left:26.40px;top:207.00px;font-size:9px;transform:scaleX(0.8780);">Rotation</span>
<span class="t" style="left:26.40px;top:230.50px;font-size:9px;transform:scaleX(0.8780);">Opacity</span>
<span class="t" style="left:174.00px;top:137.00px;font-size:9px;transform:scaleX(0.8657);color:#4f97e3;">960</span>
<span class="t" style="left:188.70px;top:137.00px;font-size:9px;transform:scaleX(0.9328);">X</span>
<span class="t" style="left:229.00px;top:137.00px;font-size:9px;transform:scaleX(0.8657);color:#4f97e3;">540</span>
<span class="t" style="left:243.60px;top:137.00px;font-size:9px;transform:scaleX(0.9328);">Y</span>
<span class="t" style="left:174.00px;top:160.00px;font-size:9px;transform:scaleX(0.8657);color:#4f97e3;">960</span>
<span class="t" style="left:188.70px;top:160.00px;font-size:9px;transform:scaleX(0.9328);">X</span>
<span class="t" style="left:229.00px;top:160.00px;font-size:9px;transform:scaleX(0.8657);color:#4f97e3;">540</span>
<span class="t" style="left:243.60px;top:160.00px;font-size:9px;transform:scaleX(0.9328);">Y</span>
<span class="t" style="left:174.00px;top:184.00px;font-size:9px;transform:scaleX(0.8590);color:#4f97e3;">74</span>
<span class="t" style="left:185.00px;top:184.00px;font-size:9px;transform:scaleX(0.8748);">%</span>
<span class="t" style="left:229.00px;top:184.00px;font-size:9px;transform:scaleX(0.8775);color:#6e6e6e;">74 %</span>
<span class="t" style="left:174.00px;top:207.00px;font-size:9px;transform:scaleX(0.8990);color:#4f97e3;">0</span>
<span class="t" style="left:180.00px;top:207.00px;font-size:9px;transform:scaleX(0.8335);">°</span>
<span class="t" style="left:174.00px;top:230.50px;font-size:9px;transform:scaleX(0.8657);color:#4f97e3;">100</span>
<span class="t" style="left:189.00px;top:230.50px;font-size:9px;transform:scaleX(0.8748);">%</span>
<span class="t" style="left:25.50px;top:260.60px;font-size:9px;transform:scaleX(0.8714);color:#e0e0e0;-webkit-text-stroke:0.35px currentColor;">Crop</span>
<span class="t" style="left:26.40px;top:284.00px;font-size:9px;transform:scaleX(0.8793);">Left</span>
<span class="t" style="left:174.00px;top:284.00px;font-size:9px;transform:scaleX(0.8792);color:#4f97e3;">0.0</span>
<span class="t" style="left:186.50px;top:284.00px;font-size:9px;transform:scaleX(0.8748);">%</span>
<span class="t" style="left:26.40px;top:307.00px;font-size:9px;transform:scaleX(0.9234);">Top</span>
<span class="t" style="left:174.00px;top:307.00px;font-size:9px;transform:scaleX(0.8792);color:#4f97e3;">0.0</span>
<span class="t" style="left:186.50px;top:307.00px;font-size:9px;transform:scaleX(0.8748);">%</span>
<span class="t" style="left:32.00px;top:341.00px;font-size:9px;transform:scaleX(0.8398);">Adjust speed...</span>
<span class="t" style="left:427.60px;top:33.70px;font-size:9px;transform:scaleX(0.8643);">Program: Sequence 01</span>
<span class="t" style="left:433.50px;top:284.07px;font-size:10.5px;transform:scaleX(0.9789);color:#4f97e3;font-weight:bold;">00:00:29:16</span>
<span class="t" style="left:714.40px;top:284.07px;font-size:10.5px;transform:scaleX(0.9789);color:#d0d0d0;font-weight:bold;">00:01:18:19</span>
<span class="t" style="left:514.70px;top:284.60px;font-size:9px;transform:scaleX(0.8802);">Fit</span>
<span class="t" style="left:643.80px;top:284.60px;font-size:9px;transform:scaleX(0.9102);">Full</span>
<span class="t" style="left:9.70px;top:368.40px;font-size:9px;transform:scaleX(0.8830);color:#f0f0f0;">Project: Hiking '25</span>
<span class="t" style="left:104.70px;top:368.40px;font-size:9px;transform:scaleX(0.8593);">Effects</span>
<span class="t" style="left:35.20px;top:388.50px;font-size:9px;transform:scaleX(0.8957);">Hiking '25.prproj</span>
<span class="t" style="left:252.50px;top:412.00px;font-size:9px;transform:scaleX(0.8783);">1 of 7 items selected</span>
<span class="t" style="left:21.00px;top:495.00px;font-size:9px;transform:scaleX(0.8113);">Hiking 1 4K.MOV</span>
<span class="t" style="left:90.00px;top:495.00px;font-size:9px;transform:scaleX(0.7992);">20:19</span>
<span class="t" style="left:122.50px;top:495.00px;font-size:9px;transform:scaleX(0.8097);">Hiking 2 HD.MOV</span>
<span class="t" style="left:191.50px;top:495.00px;font-size:9px;transform:scaleX(0.7992);">14:17</span>
<span class="t" style="left:224.00px;top:495.00px;font-size:9px;transform:scaleX(0.8113);">Hiking 3 4K.MOV</span>
<span class="t" style="left:293.00px;top:495.00px;font-size:9px;transform:scaleX(0.7992);">12:14</span>
<span class="t" style="left:406.00px;top:368.40px;font-size:9px;transform:scaleX(0.8483);">Sequence 01</span>
<span class="t" style="left:400.00px;top:386.77px;font-size:10.5px;transform:scaleX(0.9789);color:#4f97e3;font-weight:bold;">00:00:29:23</span>
<span class="t" style="left:616.00px;top:405.15px;font-size:8.5px;transform:scaleX(0.9131);">00:00:29:23</span>
<span class="t" style="left:435.30px;top:444.95px;font-size:8.5px;transform:scaleX(0.8464);color:#c8c8c8;">V2</span>
<span class="t" style="left:435.30px;top:474.95px;font-size:8.5px;transform:scaleX(0.8464);color:#f0f0f0;">V1</span>
<span class="t" style="left:400.30px;top:495.15px;font-size:8.5px;transform:scaleX(0.8099);color:#f4f4f4;font-weight:bold;">A1</span>
<span class="t" style="left:435.30px;top:495.15px;font-size:8.5px;transform:scaleX(0.8099);color:#f4f4f4;font-weight:bold;">A1</span>
<span class="t" style="left:435.30px;top:525.15px;font-size:8.5px;transform:scaleX(0.8099);color:#f4f4f4;font-weight:bold;">A2</span>
<span class="t" style="left:472.00px;top:489.99px;font-size:8px;transform:scaleX(0.9603);color:#9a9a9a;">M</span>
<span class="t" style="left:490.30px;top:489.99px;font-size:8px;transform:scaleX(0.8620);color:#9a9a9a;">S</span>
<span class="t" style="left:472.00px;top:519.99px;font-size:8px;transform:scaleX(0.9603);color:#9a9a9a;">M</span>
<span class="t" style="left:490.30px;top:519.99px;font-size:8px;transform:scaleX(0.8620);color:#9a9a9a;">S</span>
<span class="t" style="left:542.50px;top:436.85px;font-size:8.5px;transform:scaleX(0.8021);color:#e8e8e8;">Hiking 3 4...</span>
<span class="t" style="left:555.60px;top:466.85px;font-size:8.5px;transform:scaleX(0.8619);color:#ececec;">Hiking 2 HD.MOV [V]</span>
<span class="t" style="left:688.50px;top:466.85px;font-size:8.5px;transform:scaleX(0.7765);color:#ececec;">Hiki...</span>
<span class="t" style="left:594.60px;top:436.36px;font-size:9.5px;transform:scaleX(0.8932);color:#4f83a3;font-style:italic;font-family:'Liberation Serif',serif;">fx</span>
<span class="t" style="left:594.60px;top:487.06px;font-size:9.5px;transform:scaleX(0.8932);color:#4f83a3;font-style:italic;font-family:'Liberation Serif',serif;">fx</span>
<span class="t" style="left:668.00px;top:487.06px;font-size:9.5px;transform:scaleX(0.8932);color:#4f83a3;font-style:italic;font-family:'Liberation Serif',serif;">fx</span>
<span class="t" style="left:668.00px;top:466.36px;font-size:9.5px;transform:scaleX(0.8932);color:#e4e4e4;font-style:italic;font-family:'Liberation Serif',serif;">fx</span>
<span class="t" style="left:721.80px;top:466.36px;font-size:9.5px;transform:scaleX(0.8932);color:#e4e4e4;font-style:italic;font-family:'Liberation Serif',serif;">fx</span>
<span class="t" style="left:721.80px;top:487.06px;font-size:9.5px;transform:scaleX(0.8932);color:#e4e4e4;font-style:italic;font-family:'Liberation Serif',serif;">fx</span>
<span class="t" style="left:768.30px;top:541.09px;font-size:8px;transform:scaleX(0.8620);color:#a8a8a8;">S</span>
<span class="t" style="left:776.60px;top:541.09px;font-size:8px;transform:scaleX(0.8620);color:#a8a8a8;">S</span>
<span class="t" style="left:803.00px;top:39.50px;font-size:9px;transform:scaleX(0.8756);color:#f0f0f0;">Graphics Templates</span>
<span class="t" style="left:903.50px;top:39.50px;font-size:9px;transform:scaleX(0.8548);">Essential Sound</span>
<span class="t" style="left:810.70px;top:72.00px;font-size:9px;transform:scaleX(0.8906);color:#f0f0f0;">My Templates</span>
<span class="t" style="left:875.00px;top:72.49px;font-size:8px;transform:scaleX(0.8749);color:#1d1d1d;font-weight:bold;">St</span>
<span class="t" style="left:889.50px;top:72.00px;font-size:9px;transform:scaleX(0.8739);">Adobe Stock</span>
<span class="t" style="left:837.00px;top:126.60px;font-size:9px;transform:scaleX(0.8786);">Local Templates</span>
<span class="t" style="left:837.00px;top:145.60px;font-size:9px;transform:scaleX(0.8692);">Libraries</span>
<span class="t" style="left:810.60px;top:390.00px;font-size:9px;transform:scaleX(0.9074);">Venture Title</span>
<span class="t" style="left:810.60px;top:517.00px;font-size:9px;transform:scaleX(0.8950);">News Intro</span>
<div class="b menu" style="left:446.2px;top:359.5px;width:78.8px;height:41px;background:#1d1d1d;border:1px solid #363636;border-radius:3.5px;"></div><svg class="ov" viewBox="0 0 1024 576"><g transform="translate(453 368.3)" ><path d="M0.4 3.8L2.6 6L6.8 0.4" fill="none" stroke="#4f9cf0" stroke-width="1.5" stroke-linecap="round" stroke-linejoin="round"/></g><g transform="translate(465.6 366.6)" ><rect x="0.00" y="0.00" width="1.6" height="1.6" fill="#d8d8d8"/><rect x="0.00" y="8.60" width="1.6" height="1.6" fill="#d8d8d8"/><rect x="0.00" y="0.00" width="1.6" height="1.6" fill="#d8d8d8"/><rect x="8.60" y="0.00" width="1.6" height="1.6" fill="#d8d8d8"/><rect x="2.87" y="0.00" width="1.6" height="1.6" fill="#d8d8d8"/><rect x="2.87" y="8.60" width="1.6" height="1.6" fill="#d8d8d8"/><rect x="0.00" y="2.87" width="1.6" height="1.6" fill="#d8d8d8"/><rect x="8.60" y="2.87" width="1.6" height="1.6" fill="#d8d8d8"/><rect x="5.73" y="0.00" width="1.6" height="1.6" fill="#d8d8d8"/><rect x="5.73" y="8.60" width="1.6" height="1.6" fill="#d8d8d8"/><rect x="0.00" y="5.73" width="1.6" height="1.6" fill="#d8d8d8"/><rect x="8.60" y="5.73" width="1.6" height="1.6" fill="#d8d8d8"/><rect x="8.60" y="0.00" width="1.6" height="1.6" fill="#d8d8d8"/><rect x="8.60" y="8.60" width="1.6" height="1.6" fill="#d8d8d8"/><rect x="0.00" y="8.60" width="1.6" height="1.6" fill="#d8d8d8"/><rect x="8.60" y="8.60" width="1.6" height="1.6" fill="#d8d8d8"/><rect x="0.8" y="0.8" width="8.6" height="8.6" fill="none" stroke="#d8d8d8" stroke-width="0.5" opacity="0.6"/></g><g transform="translate(465.4 383.4)" ><path d="M2.6 0V8H10.6M0 2.6H8V10.6" fill="none" stroke="#d0d0d0" stroke-width="1.2"/></g></svg>
<span class="t" style="left:482.00px;top:368.00px;font-size:9px;transform:scaleX(0.8728);color:#e8e8e8;">Transform</span>
<span class="t" style="left:482.00px;top:385.30px;font-size:9px;transform:scaleX(0.8355);color:#e8e8e8;">Crop</span>
</div>
</body>
</html>
